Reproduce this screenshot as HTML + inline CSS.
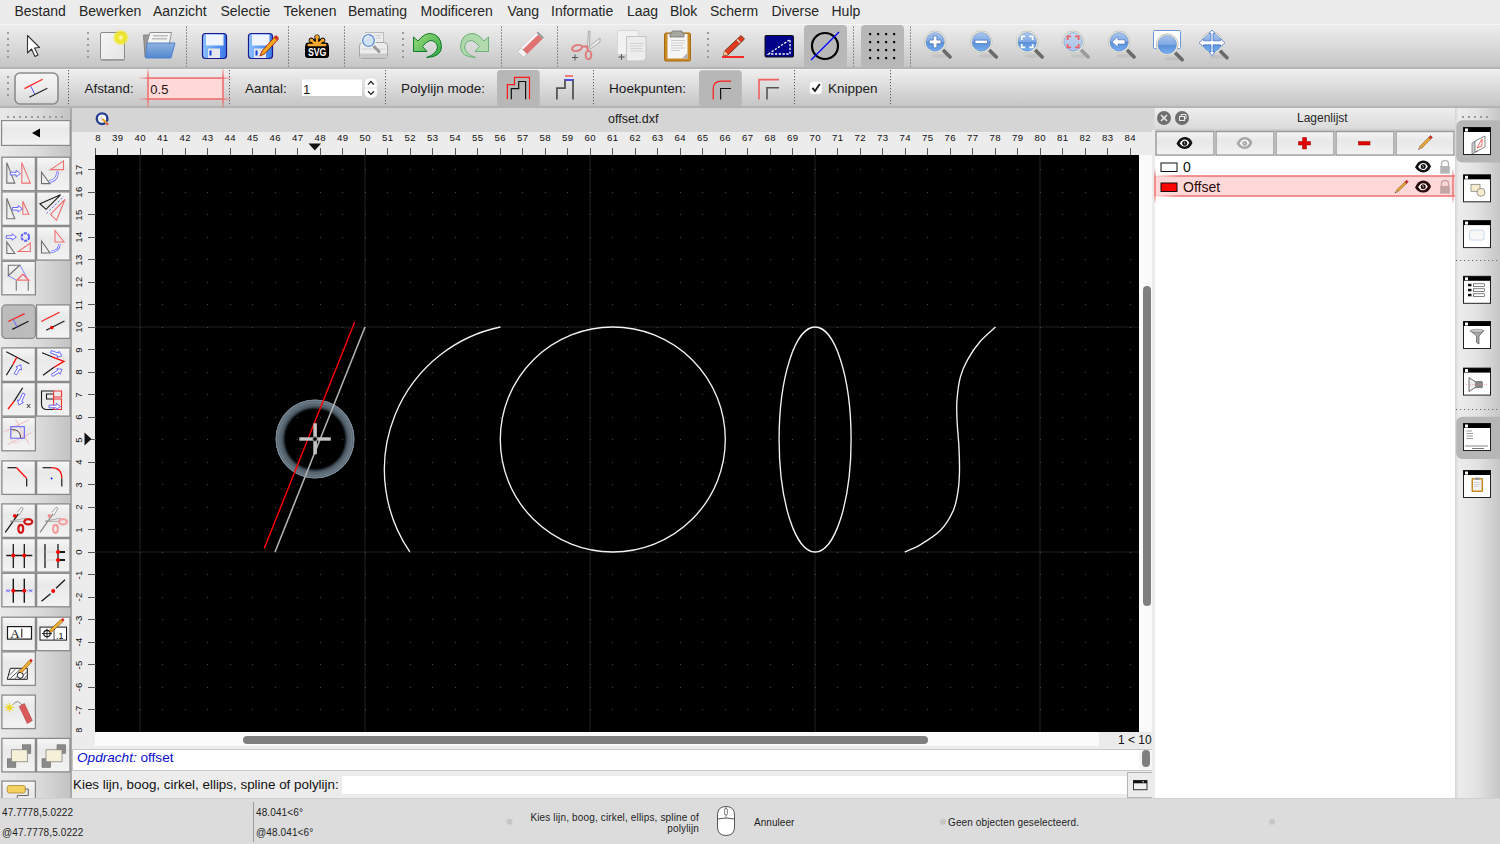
<!DOCTYPE html><html><head><meta charset="utf-8"><style>
*{margin:0;padding:0;box-sizing:border-box}
html,body{width:1500px;height:844px;overflow:hidden;background:#dcdcdc;font-family:"Liberation Sans",sans-serif;color:#222}
.a{position:absolute}
.t{position:absolute;white-space:nowrap;line-height:1}
</style></head><body>
<div class="a" style="left:0;top:0;width:1500px;height:24px;background:#ececec"></div>
<div class="t" style="left:14.5px;top:4px;font-size:14px;color:#262626">Bestand</div>
<div class="t" style="left:79px;top:4px;font-size:14px;color:#262626">Bewerken</div>
<div class="t" style="left:153px;top:4px;font-size:14px;color:#262626">Aanzicht</div>
<div class="t" style="left:220.5px;top:4px;font-size:14px;color:#262626">Selectie</div>
<div class="t" style="left:283.5px;top:4px;font-size:14px;color:#262626">Tekenen</div>
<div class="t" style="left:348px;top:4px;font-size:14px;color:#262626">Bemating</div>
<div class="t" style="left:420.5px;top:4px;font-size:14px;color:#262626">Modificeren</div>
<div class="t" style="left:507.5px;top:4px;font-size:14px;color:#262626">Vang</div>
<div class="t" style="left:551px;top:4px;font-size:14px;color:#262626">Informatie</div>
<div class="t" style="left:627px;top:4px;font-size:14px;color:#262626">Laag</div>
<div class="t" style="left:670px;top:4px;font-size:14px;color:#262626">Blok</div>
<div class="t" style="left:710px;top:4px;font-size:14px;color:#262626">Scherm</div>
<div class="t" style="left:771.5px;top:4px;font-size:14px;color:#262626">Diverse</div>
<div class="t" style="left:831.5px;top:4px;font-size:14px;color:#262626">Hulp</div>
<div class="a" style="left:0;top:24px;width:1500px;height:45px;background:linear-gradient(#ececec,#e2e2e2 30%,#d0d0d0 75%,#c6c6c6);border-top:1px solid #f6f6f6;border-bottom:2px solid #b4b4b4"></div>
<svg class="a" style="left:0;top:24px" width="1500" height="44" viewBox="0 24 1500 44"><defs><radialGradient id="glow"><stop offset="0" stop-color="#fffff4"/><stop offset=".2" stop-color="#f6f070"/><stop offset=".45" stop-color="#eee420"/><stop offset=".75" stop-color="#f0e830" stop-opacity=".8"/><stop offset="1" stop-color="#f2ea20" stop-opacity="0"/></radialGradient><linearGradient id="paper" x1="0" y1="0" x2="1" y2="1"><stop offset="0" stop-color="#f6f6f6"/><stop offset="1" stop-color="#e4e4e4"/></linearGradient><linearGradient id="fblue" x1="0" y1="0" x2="0" y2="1"><stop offset="0" stop-color="#8fb3e0"/><stop offset="1" stop-color="#5288cf"/></linearGradient><linearGradient id="flop" x1="0" y1="0" x2="1" y2="0"><stop offset="0" stop-color="#8ec2ff"/><stop offset=".5" stop-color="#5d9cf5"/><stop offset="1" stop-color="#3a7ae8"/></linearGradient><linearGradient id="grn" x1="0" y1="0" x2="1" y2="1"><stop offset="0" stop-color="#9ddb78"/><stop offset="1" stop-color="#2ea847"/></linearGradient><linearGradient id="grn2" x1="0" y1="0" x2="1" y2="1"><stop offset="0" stop-color="#a9d8a8"/><stop offset="1" stop-color="#b9ddb0"/></linearGradient><linearGradient id="mag" x1="0" y1="0" x2="0" y2="1"><stop offset="0" stop-color="#a9c6ee"/><stop offset=".5" stop-color="#7ea7e3"/><stop offset=".52" stop-color="#5b8fd8"/><stop offset="1" stop-color="#76aef0"/></linearGradient><linearGradient id="magl" x1="0" y1="0" x2="0" y2="1"><stop offset="0" stop-color="#c9daf2"/><stop offset=".5" stop-color="#b5cbea"/><stop offset="1" stop-color="#a9c4ec"/></linearGradient></defs><rect x="7" y="32" width="2" height="2" fill="#9a9a9a"/><rect x="7" y="38" width="2" height="2" fill="#9a9a9a"/><rect x="7" y="44" width="2" height="2" fill="#9a9a9a"/><rect x="7" y="50" width="2" height="2" fill="#9a9a9a"/><rect x="7" y="56" width="2" height="2" fill="#9a9a9a"/><rect x="87" y="32" width="2" height="2" fill="#9a9a9a"/><rect x="87" y="38" width="2" height="2" fill="#9a9a9a"/><rect x="87" y="44" width="2" height="2" fill="#9a9a9a"/><rect x="87" y="50" width="2" height="2" fill="#9a9a9a"/><rect x="87" y="56" width="2" height="2" fill="#9a9a9a"/><rect x="402" y="32" width="2" height="2" fill="#9a9a9a"/><rect x="402" y="38" width="2" height="2" fill="#9a9a9a"/><rect x="402" y="44" width="2" height="2" fill="#9a9a9a"/><rect x="402" y="50" width="2" height="2" fill="#9a9a9a"/><rect x="402" y="56" width="2" height="2" fill="#9a9a9a"/><rect x="707" y="32" width="2" height="2" fill="#9a9a9a"/><rect x="707" y="38" width="2" height="2" fill="#9a9a9a"/><rect x="707" y="44" width="2" height="2" fill="#9a9a9a"/><rect x="707" y="50" width="2" height="2" fill="#9a9a9a"/><rect x="707" y="56" width="2" height="2" fill="#9a9a9a"/><line x1="186.5" y1="26.5" x2="186.5" y2="66.5" stroke="#5a5a5a" stroke-width="1" stroke-dasharray="1.2 1.8"/><line x1="288.5" y1="26.5" x2="288.5" y2="66.5" stroke="#5a5a5a" stroke-width="1" stroke-dasharray="1.2 1.8"/><line x1="344.5" y1="26.5" x2="344.5" y2="66.5" stroke="#5a5a5a" stroke-width="1" stroke-dasharray="1.2 1.8"/><line x1="501.5" y1="26.5" x2="501.5" y2="66.5" stroke="#5a5a5a" stroke-width="1" stroke-dasharray="1.2 1.8"/><line x1="557.5" y1="26.5" x2="557.5" y2="66.5" stroke="#5a5a5a" stroke-width="1" stroke-dasharray="1.2 1.8"/><line x1="853.5" y1="26.5" x2="853.5" y2="66.5" stroke="#5a5a5a" stroke-width="1" stroke-dasharray="1.2 1.8"/><line x1="910.5" y1="26.5" x2="910.5" y2="66.5" stroke="#5a5a5a" stroke-width="1" stroke-dasharray="1.2 1.8"/><path d="M27.5 35.5 L27.5 53 L31.5 49 L35 56.5 L38 55 L34.5 48 L39.5 47.5 Z" fill="#fff" stroke="#333" stroke-width="1.1" stroke-linejoin="round"/><rect x="100.5" y="32.5" width="24" height="27.5" rx="1.5" fill="url(#paper)" stroke="#8a8a8a"/><rect x="101" y="59" width="23.5" height="1.5" fill="#999"/><circle cx="120.8" cy="37.6" r="8.2" fill="url(#glow)"/><path d="M143.5 35 L151 35 L151 57 L145 57 Z" fill="#9a9a9a" stroke="#777" stroke-width=".8"/><path d="M150 32.5 L171.5 32.5 L169 45 L146.5 45 Z" fill="#f4f4f4" stroke="#888" stroke-width=".9"/><rect x="153" y="35" width="15" height="1.5" fill="#bbb"/><rect x="152" y="38" width="15" height="1.5" fill="#bbb"/><path d="M147 43 L175 43 L171 58 L145.5 58 Z" fill="url(#fblue)" stroke="#4a7fc8" stroke-width=".9"/><rect x="202.5" y="33.5" width="24" height="25" rx="3" fill="url(#flop)" stroke="#1a1a90" stroke-width="1.2"/><rect x="206" y="34.5" width="17.5" height="11" fill="#f0f4ff"/><rect x="208" y="48.5" width="12" height="9.5" fill="#e6e6ee"/><rect x="209.5" y="50.5" width="2" height="5" fill="#1040e0"/><rect x="248.5" y="33.5" width="24" height="25" rx="3" fill="url(#flop)" stroke="#1a1a90" stroke-width="1.2"/><rect x="252" y="34.5" width="17.5" height="11" fill="#f0f4ff"/><rect x="254" y="48.5" width="12" height="9.5" fill="#e6e6ee"/><rect x="255.5" y="50.5" width="2" height="5" fill="#1040e0"/><path d="M260 56 L262 51 L275 36.5 L278 39.5 L265 53.5 Z" fill="#f7a81c" stroke="#a02010" stroke-width=".9"/><path d="M274 37.5 L276 35 L279 38 L277 40.5 Z" fill="#d03020"/><g stroke="#000" stroke-width="5.2" stroke-linecap="round" fill="none"><path d="M308 45 H326 M317 45 V37 M317 45 L311.3 40.2 M317 45 L322.7 40.2"/></g><rect x="305" y="44.5" width="24" height="13.5" rx="3" fill="#000"/><g stroke="#f7a72b" stroke-width="2.4" stroke-linecap="round" fill="none"><path d="M308.6 45 H325.4 M317 45 V37.2 M317 45 L311.5 40.4 M317 45 L322.5 40.4"/></g><circle cx="317" cy="37" r="2" fill="#f7a72b"/><circle cx="311.3" cy="40.2" r="1.8" fill="#f7a72b"/><circle cx="322.7" cy="40.2" r="1.8" fill="#f7a72b"/><text x="317.2" y="56.3" text-anchor="middle" font-family="Liberation Sans" font-weight="bold" font-size="11.5" fill="#fff" textLength="18.5" lengthAdjust="spacingAndGlyphs">SVG</text><rect x="365.5" y="32.5" width="18" height="16" fill="#ececec" stroke="#bdbdbd"/><path d="M369 35.5 H381 M369 38 H381" stroke="#cfcfcf" stroke-width="1"/><path d="M359.5 46 Q359.5 42.5 363 42.5 L384 42.5 Q387.5 42.5 387.5 46 L387.5 56 Q387.5 58.5 385 58.5 L362 58.5 Q359.5 58.5 359.5 56 Z" fill="#ececec" stroke="#a8a8a8"/><rect x="360" y="53.5" width="27" height="4.5" fill="#cacaca"/><rect x="361" y="48.5" width="25" height="1" fill="#d0d0d0"/><line x1="372.5" y1="45" x2="379" y2="51.5" stroke="#9a9a9a" stroke-width="3" stroke-linecap="round"/><circle cx="368.5" cy="40.5" r="7.5" fill="#f2f2f2"/><circle cx="368.5" cy="40.5" r="5.8" fill="#d2e2f6" stroke="#5a8ad0" stroke-width="1.3"/><path d="M364.5 39.5 Q365.5 36 369 35.8" fill="none" stroke="#fff" stroke-width="1.2" opacity=".8"/><path d="M413.5 37 L413.5 51.5 L427 51.5 L422.5 46.5 Q426 42 430 40.5 Q436.5 40.5 437.5 47 Q437 54 426.5 57.5 Q441.5 57 441.5 46.5 Q440.5 34 430 33.5 Q424 33.5 418 41 Z" fill="url(#grn)" stroke="#127a2c" stroke-width="1"/><path d="M488.5 37 L488.5 51.5 L475 51.5 L479.5 46.5 Q476 42 472 40.5 Q465.5 40.5 464.5 47 Q465 54 475.5 57.5 Q460.5 57 460.5 46.5 Q461.5 34 472 33.5 Q478 33.5 484 41 Z" fill="url(#grn2)" stroke="#6cb07c" stroke-width="1"/><ellipse cx="532" cy="57.5" rx="10" ry="1.5" fill="#cfcfcf"/><path d="M517.5 51.5 L536.5 33 L542.5 39 L523.5 57.5 Z" fill="#e07272"/><path d="M520.5 48.5 L539.5 30 L540.5 36 L521.5 54.5 Z" fill="#f2f2f2" opacity=".0"/><path d="M519.7 49.3 L538.2 31.3 L539.9 33 L521.4 51 Z" fill="#f6f6f6"/><path d="M536.5 33 L538 31.5 L544 37.5 L542.5 39 Z" fill="#9a9a9a"/><path d="M517.5 51.5 L521 48 L527 54 L523.5 57.5 Z" fill="#f2f2f2" stroke="#b8b8b8" stroke-width=".6"/><path d="M587.5 46 L588.5 31 L590 31 L589.5 47 Z" fill="#f0f0f0" stroke="#9a9a9a" stroke-width=".8"/><path d="M589 47 L600 38 L600 42 L590 49 Z" fill="#f0f0f0" stroke="#9a9a9a" stroke-width=".8"/><ellipse cx="577" cy="48" rx="5" ry="2.8" fill="none" stroke="#e07a7a" stroke-width="2" transform="rotate(-15 577 48)"/><ellipse cx="588.5" cy="55" rx="2.8" ry="4.3" fill="none" stroke="#e07a7a" stroke-width="2"/><path d="M581 46.5 L587 46.5 L588 51" stroke="#e07a7a" stroke-width="2" fill="none"/><path d="M572 57.5 H578 M575 54.5 V60.5" stroke="#555" stroke-width="1"/><rect x="617.5" y="30.5" width="21" height="24" rx="1.5" fill="#f2f2f2" stroke="#d8d8d8"/><path d="M626.5 36.5 H646 V58 L643 61 H626.5 Z" fill="#ededed" stroke="#c4c4c4"/><path d="M630 43.5 H643.5 M630 46 H643 M630 48.5 H642 M630 51 H643.5" stroke="#cfcfcf" stroke-width=".9"/><path d="M618.5 57 H624.5 M621.5 54 V60" stroke="#555" stroke-width="1"/><rect x="664.5" y="33" width="26" height="28" rx="1.5" fill="#c98a26" stroke="#a66a10"/><rect x="667.5" y="34" width="20" height="24.5" fill="#f6f6f6"/><path d="M672 31 H682 V33 H684 V37 H670 V33 H672 Z" fill="#a8a8a0" stroke="#777" stroke-width=".8"/><path d="M671 40.5 H685 M671 43 H684.5 M671 45.5 H683 M671 48 H685 M671 50.5 H680" stroke="#c8c8c8" stroke-width=".9"/><path d="M682 58.5 L687.5 53 V58.5 Z" fill="#b0b0b0"/><path d="M723.5 55.5 L724.5 51 L741 35.5 L744.5 39 L728 55 Z" fill="#e03a20" stroke="#6a3a10" stroke-width=".9"/><path d="M723.5 55.5 L724.5 51 L728 54.5 Z" fill="#f2c8a0"/><path d="M737 39.5 L740 42.5" stroke="#ddd" stroke-width="1.4"/><rect x="722" y="56.2" width="22" height="1.6" fill="#ff0000"/><rect x="765" y="35.5" width="28.5" height="21.5" rx="1" fill="#000088" stroke="#111" stroke-width="1"/><path d="M768.5 54 L790 39.5 V54 Z" fill="none" stroke="#fff" stroke-width="1.3" stroke-dasharray="2.3 1.5"/><rect x="804" y="25" width="43" height="43" rx="4" fill="#b8b8b8"/><circle cx="825" cy="46" r="13" fill="none" stroke="#000" stroke-width="2.2"/><line x1="811" y1="60" x2="839" y2="32" stroke="#0000ff" stroke-width="1.2"/><rect x="861" y="25" width="43" height="43" rx="4" fill="#b8b8b8"/><rect x="869" y="33" width="2.2" height="2.2" fill="#111"/><rect x="869" y="41" width="2.2" height="2.2" fill="#111"/><rect x="869" y="49" width="2.2" height="2.2" fill="#111"/><rect x="869" y="57" width="2.2" height="2.2" fill="#111"/><rect x="877" y="33" width="2.2" height="2.2" fill="#111"/><rect x="877" y="41" width="2.2" height="2.2" fill="#111"/><rect x="877" y="49" width="2.2" height="2.2" fill="#111"/><rect x="877" y="57" width="2.2" height="2.2" fill="#111"/><rect x="885" y="33" width="2.2" height="2.2" fill="#111"/><rect x="885" y="41" width="2.2" height="2.2" fill="#111"/><rect x="885" y="49" width="2.2" height="2.2" fill="#111"/><rect x="885" y="57" width="2.2" height="2.2" fill="#111"/><rect x="893" y="33" width="2.2" height="2.2" fill="#111"/><rect x="893" y="41" width="2.2" height="2.2" fill="#111"/><rect x="893" y="49" width="2.2" height="2.2" fill="#111"/><rect x="893" y="57" width="2.2" height="2.2" fill="#111"/><ellipse cx="941.1" cy="55.9" rx="9" ry="2" fill="#000" opacity=".06"/><line x1="943.6" y1="50.4" x2="950.1" y2="56.9" stroke="#6a6a6a" stroke-width="3.6" stroke-linecap="round"/><circle cx="935.1" cy="41.9" r="11" fill="#f2f2ec" stroke="#c8c8bc" stroke-width="1"/><circle cx="935.1" cy="41.9" r="9.3" fill="url(#mag)" stroke="#6f8fb8" stroke-width=".6"/><path d="M933.3 36 H936.9 V40.1 H941 V43.7 H936.9 V47.8 H933.3 V43.7 H929.2 V40.1 H933.3 Z" fill="#fff" stroke="#2a5aa8" stroke-width=".6"/><ellipse cx="987.3" cy="55.9" rx="9" ry="2" fill="#000" opacity=".06"/><line x1="989.8" y1="50.4" x2="996.3" y2="56.9" stroke="#6a6a6a" stroke-width="3.6" stroke-linecap="round"/><circle cx="981.3" cy="41.9" r="11" fill="#f2f2ec" stroke="#c8c8bc" stroke-width="1"/><circle cx="981.3" cy="41.9" r="9.3" fill="url(#mag)" stroke="#6f8fb8" stroke-width=".6"/><rect x="975" y="40.1" width="12.6" height="3.6" fill="#fff" stroke="#2a5aa8" stroke-width=".6"/><ellipse cx="1033.2" cy="55.9" rx="9" ry="2" fill="#000" opacity=".06"/><line x1="1035.7" y1="50.4" x2="1042.2" y2="56.9" stroke="#6a6a6a" stroke-width="3.6" stroke-linecap="round"/><circle cx="1027.2" cy="41.9" r="11" fill="#f2f2ec" stroke="#c8c8bc" stroke-width="1"/><circle cx="1027.2" cy="41.9" r="9.3" fill="url(#mag)" stroke="#6f8fb8" stroke-width=".6"/><path d="M1021.7 39.9 V36.4 H1025.2 M1029.2 36.4 H1032.7 V39.9 M1032.7 43.9 V47.4 H1029.2 M1025.2 47.4 H1021.7 V43.9" fill="none" stroke="#fff" stroke-width="1.8"/><ellipse cx="1079.1" cy="55.9" rx="9" ry="2" fill="#000" opacity=".06"/><line x1="1081.6" y1="50.4" x2="1088.1" y2="56.9" stroke="#9a9a9a" stroke-width="3.6" stroke-linecap="round"/><circle cx="1073.1" cy="41.9" r="11" fill="#f2f2ec" stroke="#c8c8bc" stroke-width="1"/><circle cx="1073.1" cy="41.9" r="9.3" fill="url(#magl)" stroke="#6f8fb8" stroke-width=".6"/><path d="M1067.6 39.9 V36.4 H1071.1 M1075.1 36.4 H1078.6 V39.9 M1078.6 43.9 V47.4 H1075.1 M1071.1 47.4 H1067.6 V43.9" fill="none" stroke="#f06060" stroke-width="1.8"/><ellipse cx="1125.1" cy="55.9" rx="9" ry="2" fill="#000" opacity=".06"/><line x1="1127.6" y1="50.4" x2="1134.1" y2="56.9" stroke="#6a6a6a" stroke-width="3.6" stroke-linecap="round"/><circle cx="1119.1" cy="41.9" r="11" fill="#f2f2ec" stroke="#c8c8bc" stroke-width="1"/><circle cx="1119.1" cy="41.9" r="9.3" fill="url(#mag)" stroke="#6f8fb8" stroke-width=".6"/><path d="M1112 41.9 L1118 36.5 V39.8 H1125 V44 H1118 V47.3 Z" fill="#fff" stroke="#2a5aa8" stroke-width=".5"/><rect x="1153.5" y="30.5" width="27" height="18" rx="1" fill="#fff" stroke="#6a96d8"/><ellipse cx="1173.2" cy="58.7" rx="9" ry="2" fill="#000" opacity=".06"/><line x1="1175.7" y1="53.2" x2="1182.2" y2="59.7" stroke="#6a6a6a" stroke-width="3.6" stroke-linecap="round"/><circle cx="1167.2" cy="44.7" r="11" fill="#f2f2ec" stroke="#c8c8bc" stroke-width="1"/><circle cx="1167.2" cy="44.7" r="9.3" fill="url(#mag)" stroke="#6f8fb8" stroke-width=".6"/><ellipse cx="1218" cy="56.8" rx="9" ry="2" fill="#000" opacity=".06"/><line x1="1220.5" y1="51.3" x2="1227" y2="57.8" stroke="#6a6a6a" stroke-width="3.6" stroke-linecap="round"/><circle cx="1212" cy="42.8" r="11" fill="#f2f2ec" stroke="#c8c8bc" stroke-width="1"/><circle cx="1212" cy="42.8" r="9.3" fill="url(#mag)" stroke="#6f8fb8" stroke-width=".6"/><path d="M1212 30 L1215 33.5 H1213 V40.8 H1220.5 V38.8 L1225 42.8 L1220.5 46.8 V44.8 H1213 V52 H1215 L1212 55.5 L1209 52 H1211 V44.8 H1203.5 V46.8 L1199 42.8 L1203.5 38.8 V40.8 H1211 V33.5 H1209 Z" fill="#fff" stroke="#3a6ac0" stroke-width=".7"/></svg>
<div class="a" style="left:0;top:69px;width:1500px;height:39px;background:linear-gradient(#eeeeee,#e2e2e2 30%,#d0d0d0 75%,#c6c6c6);border-top:1px solid #f2f2f2;border-bottom:2px solid #b4b4b4"></div>
<svg class="a" style="left:0;top:68px" width="1500" height="40" viewBox="0 68 1500 40"><rect x="7" y="76" width="2" height="2" fill="#9a9a9a"/><rect x="7" y="82" width="2" height="2" fill="#9a9a9a"/><rect x="7" y="88" width="2" height="2" fill="#9a9a9a"/><rect x="7" y="94" width="2" height="2" fill="#9a9a9a"/><defs><linearGradient id="btn" x1="0" y1="0" x2="0" y2="1"><stop offset="0" stop-color="#f6f6f6"/><stop offset=".5" stop-color="#ececec"/><stop offset="1" stop-color="#d8d8d8"/></linearGradient></defs><rect x="15" y="73" width="43" height="31" rx="5" fill="url(#btn)" stroke="#8c8c8c" stroke-width="1.6"/><line x1="24.5" y1="88.6" x2="42.6" y2="79.2" stroke="#ff2020" stroke-width="1.2"/><line x1="29.4" y1="97.3" x2="47.3" y2="88.3" stroke="#222" stroke-width="1.2"/><line x1="30.8" y1="86.3" x2="35" y2="94.6" stroke="#5050ff" stroke-width="1"/><line x1="68.5" y1="70" x2="68.5" y2="106" stroke="#5a5a5a" stroke-width="1" stroke-dasharray="1.2 1.8"/><line x1="229.5" y1="70" x2="229.5" y2="106" stroke="#5a5a5a" stroke-width="1" stroke-dasharray="1.2 1.8"/><line x1="385.5" y1="70" x2="385.5" y2="106" stroke="#5a5a5a" stroke-width="1" stroke-dasharray="1.2 1.8"/><line x1="593.5" y1="70" x2="593.5" y2="106" stroke="#5a5a5a" stroke-width="1" stroke-dasharray="1.2 1.8"/><line x1="794.5" y1="70" x2="794.5" y2="106" stroke="#5a5a5a" stroke-width="1" stroke-dasharray="1.2 1.8"/><line x1="890.5" y1="70" x2="890.5" y2="106" stroke="#5a5a5a" stroke-width="1" stroke-dasharray="1.2 1.8"/><rect x="148" y="78" width="75" height="21" fill="#ffd9d9"/><defs><linearGradient id="rh" x1="0" y1="0" x2="1" y2="0"><stop offset="0" stop-color="#f07070" stop-opacity="0"/><stop offset=".12" stop-color="#f07070"/><stop offset=".88" stop-color="#f07070"/><stop offset="1" stop-color="#f07070" stop-opacity="0"/></linearGradient><linearGradient id="rv" x1="0" y1="0" x2="0" y2="1"><stop offset="0" stop-color="#f07070" stop-opacity=".3"/><stop offset=".2" stop-color="#f07070"/><stop offset=".8" stop-color="#f07070"/><stop offset="1" stop-color="#f07070" stop-opacity=".3"/></linearGradient></defs><rect x="138" y="77.3" width="95" height="1.6" fill="url(#rh)"/><rect x="138" y="98.2" width="95" height="1.6" fill="url(#rh)"/><rect x="147.2" y="69" width="1.6" height="39" fill="url(#rv)"/><rect x="222.2" y="69" width="1.6" height="39" fill="url(#rv)"/><rect x="302" y="79.5" width="60" height="17.5" fill="#fff"/><rect x="302" y="96.2" width="60" height="1" fill="#bdbdbd"/><rect x="364.6" y="77.9" width="12.6" height="20" rx="5" fill="#fff" stroke="#dedede" stroke-width=".6"/><rect x="365" y="87.5" width="12" height="1" fill="#e4e4e4"/><path d="M368 84.6 L371 81.5 L374 84.6 M368 91.3 L371 94.4 L374 91.3" fill="none" stroke="#222" stroke-width="1.3"/><rect x="497" y="70" width="42.7" height="36.4" rx="3.5" fill="#b7b7b7"/><path d="M507.4 99.2 V84.6 H514.5 V77.4 H529.5 V99.2" fill="none" stroke="#ff1a1a" stroke-width="1.2"/><path d="M511.3 99.2 V88.6 H518.7 V81.5 H525.6 V99.2" fill="none" stroke="#111" stroke-width="1.2"/><path d="M556.9 99.5 V88.1 H565 V80 H573 V99.5" fill="none" stroke="#555" stroke-width="1.8"/><rect x="565" y="79" width="8" height="1.7" fill="#4a4aff"/><rect x="565" y="75.2" width="8" height="1.6" fill="#f06060"/><rect x="699" y="70.3" width="42.8" height="36" rx="3.5" fill="#b7b7b7"/><path d="M713.2 99.5 V89 Q713.2 81.2 721.5 81.2 H731" fill="none" stroke="#ff1a1a" stroke-width="1.2"/><path d="M720.6 99.5 V88.5 H731" fill="none" stroke="#111" stroke-width="1.2"/><path d="M759 99.5 V79.6 H779" fill="none" stroke="#f06060" stroke-width="1.6"/><path d="M767 99.5 V87.8 H779" fill="none" stroke="#555" stroke-width="1.6"/><rect x="809.8" y="81.5" width="12.2" height="12.6" rx="3" fill="#fff" stroke="#e0e0e0" stroke-width=".6"/><path d="M812.4 87.8 L815 91 L819.8 84" fill="none" stroke="#1a1a1a" stroke-width="1.9"/></svg>
<div class="t" style="left:84.5px;top:82.26px;font-size:13.4px;color:#1a1a1a;">Afstand:</div>
<div class="t" style="left:150.3px;top:82.60px;font-size:13px;color:#1e1010;">0.5</div>
<div class="t" style="left:245px;top:82.26px;font-size:13.4px;color:#1a1a1a;">Aantal:</div>
<div class="t" style="left:303px;top:82.60px;font-size:13px;color:#1a1a1a;">1</div>
<div class="t" style="left:401px;top:82.17px;font-size:13.5px;color:#1a1a1a;">Polylijn mode:</div>
<div class="t" style="left:609px;top:82.09px;font-size:13.6px;color:#1a1a1a;">Hoekpunten:</div>
<div class="t" style="left:828px;top:82.17px;font-size:13.5px;color:#1a1a1a;">Knippen</div>
<div class="a" style="left:0;top:108px;width:71px;height:690px;background:linear-gradient(90deg,#e9e9e9,#dadada 55%,#c3c3c3)"></div>
<div class="a" style="left:70px;top:108px;width:2px;height:690px;background:#a9a9a9"></div>
<svg class="a" style="left:0;top:108px" width="72" height="690" viewBox="0 108 72 690"><defs><linearGradient id="lb" x1="0" y1="0" x2="0" y2="1"><stop offset="0" stop-color="#f7f7f7"/><stop offset=".35" stop-color="#e9e9e9"/><stop offset="1" stop-color="#f3f3f3"/></linearGradient><marker id="ah" viewBox="0 0 10 10" refX="5" refY="5" markerWidth="3" markerHeight="3" orient="auto"><path d="M0 0L10 5L0 10z" fill="#fff" stroke="#5a5aff" stroke-width="2"/></marker></defs><rect x="7" y="116" width="2" height="2" fill="#9a9a9a"/><rect x="13" y="116" width="2" height="2" fill="#9a9a9a"/><rect x="19" y="116" width="2" height="2" fill="#9a9a9a"/><rect x="25" y="116" width="2" height="2" fill="#9a9a9a"/><rect x="31" y="116" width="2" height="2" fill="#9a9a9a"/><rect x="37" y="116" width="2" height="2" fill="#9a9a9a"/><rect x="43" y="116" width="2" height="2" fill="#9a9a9a"/><rect x="49" y="116" width="2" height="2" fill="#9a9a9a"/><rect x="55" y="116" width="2" height="2" fill="#9a9a9a"/><rect x="61" y="116" width="2" height="2" fill="#9a9a9a"/><rect x="1.6" y="120.6" width="68.6" height="24.8" fill="url(#lb)" stroke="#8a8a8a" stroke-width="1.2"/><path d="M32 133 L40 128.5 V137.5 Z" fill="#000"/><rect x="1.9" y="157.2" width="33.5" height="33.5" fill="url(#lb)" stroke="#8a8a8a" stroke-width="1.3"/><g transform="translate(1.3,156.6)"><path d="M5.5 6 V26.5 H13.5 Z" fill="none" stroke="#707070" stroke-width="1.1"/><path d="M20.5 6 V26.5 H29 Z" fill="none" stroke="#f27070" stroke-width="1.1"/><path d="M9.00 18.30 L14.80 18.30 L14.80 20.20 L19.00 17.00 L14.80 13.80 L14.80 15.70 L9.00 15.70 Z" fill="#fff" stroke="#5a5aff" stroke-width=".9" stroke-linejoin="miter"/></g><rect x="36.6" y="157.2" width="33.4" height="33.5" fill="url(#lb)" stroke="#8a8a8a" stroke-width="1.3"/><g transform="translate(36,156.6)"><path d="M14.5 13 L27.5 4.5 V13 Z" fill="none" stroke="#f27070" stroke-width="1.1"/><path d="M5.5 15.5 V27 H14 Z" fill="none" stroke="#707070" stroke-width="1.1"/><path d="M13 25 Q21 24 21.5 16" fill="none" stroke="#5a5aff" stroke-width="2.6"/><path d="M13 25 Q21 24 21.5 16" fill="none" stroke="#fff" stroke-width="1.1" marker-end="url(#ah)"/></g><rect x="1.9" y="191.9" width="33.5" height="33.5" fill="url(#lb)" stroke="#8a8a8a" stroke-width="1.3"/><g transform="translate(1.3,191.3)"><path d="M5.5 7 V27.5 H13.5 Z" fill="none" stroke="#707070" stroke-width="1.1"/><path d="M21.5 10 V23 H27.5 Z" fill="none" stroke="#f27070" stroke-width="1.1"/><path d="M11.00 18.80 L16.80 18.80 L16.80 20.70 L21.00 17.50 L16.80 14.30 L16.80 16.20 L11.00 16.20 Z" fill="#fff" stroke="#5a5aff" stroke-width=".9" stroke-linejoin="miter"/></g><rect x="36.6" y="191.9" width="33.4" height="33.5" fill="url(#lb)" stroke="#8a8a8a" stroke-width="1.3"/><g transform="translate(36,191.3)"><path d="M4 12.5 L24.5 3.5 L10 18 Z" fill="none" stroke="#1a1a1a" stroke-width="1.1"/><path d="M14.5 23 L29 8 L20.5 29 Z" fill="none" stroke="#f27070" stroke-width="1.1"/><line x1="10.5" y1="22" x2="28" y2="5" stroke="#5a5aff" stroke-width="1" stroke-dasharray="2 2"/></g><rect x="1.9" y="226.6" width="33.5" height="33.5" fill="url(#lb)" stroke="#8a8a8a" stroke-width="1.3"/><g transform="translate(1.3,226.0)"><path d="M5.00 12.30 L10.80 12.30 L10.80 14.20 L15.00 11.00 L10.80 7.80 L10.80 9.70 L5.00 9.70 Z" fill="#fff" stroke="#5a5aff" stroke-width=".9" stroke-linejoin="miter"/><circle cx="24" cy="11" r="3.8" fill="none" stroke="#5a5aff" stroke-width="2" stroke-dasharray="3 1"/><path d="M5.5 16 V27.5 H13.5 Z" fill="none" stroke="#707070" stroke-width="1.1"/><path d="M17 25.5 L29 17 V25.5 Z" fill="none" stroke="#f27070" stroke-width="1.1"/></g><rect x="36.6" y="226.6" width="33.4" height="33.5" fill="url(#lb)" stroke="#8a8a8a" stroke-width="1.3"/><g transform="translate(36,226.0)"><path d="M19 4.5 V16 H28 Z" fill="none" stroke="#f27070" stroke-width="1.1"/><path d="M5.5 15 V27 H14 Z" fill="none" stroke="#707070" stroke-width="1.1"/><path d="M15 26 Q23 25 23.5 18" fill="none" stroke="#5a5aff" stroke-width="2.4"/><path d="M15 26 Q23 25 23.5 18" fill="none" stroke="#fff" stroke-width="1"/></g><rect x="1.9" y="261.3" width="33.5" height="33.5" fill="url(#lb)" stroke="#8a8a8a" stroke-width="1.3"/><g transform="translate(1.3,260.7)"><path d="M7 4.5 H18.5 L7 15 Z" fill="none" stroke="#707070" stroke-width="1.1"/><path d="M18.5 4.5 L27 19.5 M7 15 L15 19.5" stroke="#5a5aff" stroke-width=".7" fill="none"/><path d="M15.5 19.5 L21.5 13.5 L27.5 19.5 Z" fill="none" stroke="#f27070" stroke-width="1.3"/><path d="M15 20 V30 M27 20 V30" stroke="#888" stroke-width="1.3"/></g><rect x="1.9" y="304.90000000000003" width="33.5" height="33.5" rx="4" fill="#bcbcbc" stroke="#8a8a8a" stroke-width="1.2"/><g transform="translate(1.3,304.3)"><line x1="7" y1="17.2" x2="23.3" y2="9.3" stroke="#ff2020" stroke-width="1.2"/><line x1="11" y1="25.1" x2="27.2" y2="16.9" stroke="#1a1a1a" stroke-width="1.2"/><line x1="11.9" y1="15" x2="16.2" y2="23.5" stroke="#5a5aff" stroke-width=".9"/></g><rect x="36.6" y="304.90000000000003" width="33.4" height="33.5" fill="url(#lb)" stroke="#8a8a8a" stroke-width="1.3"/><g transform="translate(36,304.3)"><line x1="5.2" y1="17.2" x2="23.6" y2="8" stroke="#ff2020" stroke-width="1.2"/><line x1="10.2" y1="26" x2="28.5" y2="16.7" stroke="#1a1a1a" stroke-width="1.2"/><circle cx="15.8" cy="23.3" r="1.8" fill="#f00"/></g><rect x="1.9" y="347.90000000000003" width="33.5" height="33.5" fill="url(#lb)" stroke="#8a8a8a" stroke-width="1.3"/><g transform="translate(1.3,347.3)"><path d="M5 4.5 L28 16.5" stroke="#1a1a1a" stroke-width="1.2"/><path d="M15.5 10 L11.5 17.5" stroke="#f00" stroke-width="1.3"/><path d="M11.5 17.5 L5 28" stroke="#1a1a1a" stroke-width="1.2"/><path d="M15.13 27.65 L18.52 21.79 L20.17 22.74 L19.50 17.50 L14.63 19.53 L16.27 20.48 L12.87 26.35 Z" fill="#fff" stroke="#5a5aff" stroke-width=".9" stroke-linejoin="miter"/></g><rect x="36.6" y="347.90000000000003" width="33.4" height="33.5" fill="url(#lb)" stroke="#8a8a8a" stroke-width="1.3"/><g transform="translate(36,347.3)"><path d="M6 5.5 L16 9.5" stroke="#1a1a1a" stroke-width="1.2"/><path d="M16 9.5 L28 14 L18 20" stroke="#f00" stroke-width="1.3" fill="none"/><path d="M18 20 L7 28" stroke="#1a1a1a" stroke-width="1.2"/><path d="M14.56 5.72 L21.61 8.29 L20.96 10.07 L26.00 8.50 L23.15 4.06 L22.50 5.84 L15.44 3.28 Z" fill="#fff" stroke="#5a5aff" stroke-width=".9" stroke-linejoin="miter"/><path d="M16.67 29.11 L23.07 25.28 L24.04 26.90 L26.00 22.00 L20.75 21.42 L21.73 23.05 L15.33 26.89 Z" fill="#fff" stroke="#5a5aff" stroke-width=".9" stroke-linejoin="miter"/></g><rect x="1.9" y="382.6" width="33.5" height="33.5" fill="url(#lb)" stroke="#8a8a8a" stroke-width="1.3"/><g transform="translate(1.3,382.0)"><path d="M21.4 5.8 L12.9 19.1" stroke="#1a1a1a" stroke-width="1.2"/><path d="M12.9 19.1 L6.7 27.2" stroke="#f00" stroke-width="1.3"/><path d="M21.31 10.98 L17.98 18.63 L16.24 17.87 L17.50 23.00 L22.11 20.42 L20.37 19.67 L23.69 12.02 Z" fill="#fff" stroke="#5a5aff" stroke-width=".9" stroke-linejoin="miter"/><path d="M25.5 22 L29 26 M29 22 L25.5 26" stroke="#333" stroke-width="1"/></g><rect x="36.6" y="382.6" width="33.4" height="33.5" fill="url(#lb)" stroke="#8a8a8a" stroke-width="1.3"/><g transform="translate(36,382.0)"><path d="M17.6 9 H5.5 V22 Q5.5 27.5 11 27.5 H17.6 M17.6 12 H10.5 V17 H17.6" fill="none" stroke="#1a1a1a" stroke-width="1.1"/><path d="M17.6 9 H25.5 V15 H17.6 V17 H25.5 V27.5 H17.6 Z" fill="none" stroke="#f03030" stroke-width="1.1"/><path d="M13.00 25.80 L20.30 25.80 L20.30 27.70 L24.50 24.50 L20.30 21.30 L20.30 23.20 L13.00 23.20 Z" fill="#fff" stroke="#5a5aff" stroke-width=".9" stroke-linejoin="miter"/></g><rect x="1.9" y="417.30000000000007" width="33.5" height="33.5" fill="url(#lb)" stroke="#8a8a8a" stroke-width="1.3"/><g transform="translate(1.3,416.70000000000005)"><path d="M3 15 L28 3 M6 28 L30 16 M14 2 L28 28" stroke="#f4b0b0" stroke-width=".8" fill="none"/><circle cx="15" cy="20" r="6" fill="none" stroke="#f4c0c0" stroke-width=".8"/><rect x="9.5" y="10" width="13.5" height="11.5" fill="none" stroke="#5a5aff" stroke-width="1"/><path d="M10 13 Q19 12 19.5 21.5" fill="none" stroke="#444" stroke-width="1"/></g><rect x="1.9" y="460.90000000000003" width="33.5" height="33.5" fill="url(#lb)" stroke="#8a8a8a" stroke-width="1.3"/><g transform="translate(1.3,460.3)"><path d="M6.2 7.4 H15.3" stroke="#1a1a1a" stroke-width="1.2"/><path d="M15.3 7.4 L25.4 18.1" stroke="#f00" stroke-width="1.3"/><path d="M25.4 18.1 V26.2" stroke="#1a1a1a" stroke-width="1.2"/></g><rect x="36.6" y="460.90000000000003" width="33.4" height="33.5" fill="url(#lb)" stroke="#8a8a8a" stroke-width="1.3"/><g transform="translate(36,460.3)"><path d="M6.6 7.4 H15.2" stroke="#1a1a1a" stroke-width="1.2"/><path d="M15.2 7.4 Q25.8 7.4 25.8 18.1" fill="none" stroke="#f00" stroke-width="1.3"/><path d="M25.8 18.1 V26.2" stroke="#1a1a1a" stroke-width="1.2"/><circle cx="15.6" cy="18.1" r=".9" fill="#00f"/></g><rect x="1.9" y="503.90000000000003" width="33.5" height="33.5" fill="url(#lb)" stroke="#8a8a8a" stroke-width="1.3"/><g transform="translate(1.3,503.3)"><path d="M4 29 L21 5" stroke="#111" stroke-width="1.2"/><path d="M9 18 L24 15 L23 18 Z" fill="#f4f4f4" stroke="#888" stroke-width=".7"/><path d="M16 9 L20 4 L22 5 L18 12" fill="#f4f4f4" stroke="#888" stroke-width=".7"/><circle cx="13.5" cy="12.5" r="1.9" fill="#f00"/><ellipse cx="27" cy="18.5" rx="4" ry="2.6" fill="none" stroke="#d01818" stroke-width="2.2"/><ellipse cx="19.5" cy="25.5" rx="2.4" ry="4" fill="none" stroke="#d01818" stroke-width="2.2"/></g><rect x="36.6" y="503.90000000000003" width="33.4" height="33.5" fill="url(#lb)" stroke="#8a8a8a" stroke-width="1.3"/><g transform="translate(36,503.3)"><path d="M4 29 L21 5" stroke="#888" stroke-width="1.2"/><path d="M9 18 L24 15 L23 18 Z" fill="#f4f4f4" stroke="#888" stroke-width=".7"/><path d="M16 9 L20 4 L22 5 L18 12" fill="#f4f4f4" stroke="#888" stroke-width=".7"/><circle cx="13.5" cy="12.5" r="1.9" fill="#f09090"/><ellipse cx="27" cy="18.5" rx="4" ry="2.6" fill="none" stroke="#f4a0a0" stroke-width="2.2"/><ellipse cx="19.5" cy="25.5" rx="2.4" ry="4" fill="none" stroke="#f4a0a0" stroke-width="2.2"/></g><rect x="1.9" y="538.6" width="33.5" height="33.5" fill="url(#lb)" stroke="#8a8a8a" stroke-width="1.3"/><g transform="translate(1.3,538.0)"><path d="M12 6 V30 M23 6 V30 M5 17.5 H31" stroke="#1a1a1a" stroke-width="1.3"/><circle cx="12" cy="17.5" r="2" fill="#f00"/><circle cx="23" cy="17.5" r="2" fill="#f00"/></g><rect x="36.6" y="538.6" width="33.4" height="33.5" fill="url(#lb)" stroke="#8a8a8a" stroke-width="1.3"/><g transform="translate(36,538.0)"><path d="M9 6 V30 M22 6 V30" stroke="#1a1a1a" stroke-width="1.3"/><path d="M9 14 H22 M9 22 H22" stroke="#bbb" stroke-width=".8" stroke-dasharray="1.5 1"/><path d="M22 14 H29 M22 22 H29" stroke="#1a1a1a" stroke-width="1.8"/><circle cx="22" cy="14" r="2" fill="#f00"/><circle cx="22" cy="22" r="2" fill="#f00"/></g><rect x="1.9" y="573.3000000000001" width="33.5" height="33.5" fill="url(#lb)" stroke="#8a8a8a" stroke-width="1.3"/><g transform="translate(1.3,572.7)"><path d="M12 6 V30 M23 6 V30 M12 18 H23" stroke="#1a1a1a" stroke-width="1.4"/><path d="M5 18 H12 M23 18 H31" stroke="#5a5aff" stroke-width=".8" stroke-dasharray="1.5 1"/><path d="M5 16.5 L8 19.5 M8 16.5 L5 19.5 M28 16.5 L31 19.5 M31 16.5 L28 19.5" stroke="#5a5aff" stroke-width=".8"/><circle cx="12" cy="18" r="2" fill="#f00"/><circle cx="23" cy="18" r="2" fill="#f00"/></g><rect x="36.6" y="573.3000000000001" width="33.4" height="33.5" fill="url(#lb)" stroke="#8a8a8a" stroke-width="1.3"/><g transform="translate(36,572.7)"><path d="M5.5 28.5 L14.5 21 M20 15.5 L29 7" stroke="#1a1a1a" stroke-width="1.3"/><circle cx="17.2" cy="18.2" r="2" fill="#f00"/></g><rect x="1.9" y="617.2" width="33.5" height="33.5" fill="url(#lb)" stroke="#8a8a8a" stroke-width="1.3"/><g transform="translate(1.3,616.6)"><rect x="6.2" y="10" width="24" height="12.5" fill="#fff" stroke="#1a1a1a" stroke-width="1.2"/><text x="9" y="21" font-family="Liberation Serif" font-size="13" fill="#111">A</text><path d="M20.5 12 V21" stroke="#111" stroke-width="1"/></g><rect x="36.6" y="617.2" width="33.4" height="33.5" fill="url(#lb)" stroke="#8a8a8a" stroke-width="1.3"/><g transform="translate(36,616.6)"><rect x="4" y="10.5" width="26.5" height="13" fill="#fff" stroke="#1a1a1a" stroke-width="1"/><path d="M18 10.5 V23.5" stroke="#1a1a1a" stroke-width=".8"/><circle cx="11" cy="17" r="3.2" fill="none" stroke="#111" stroke-width="1.1"/><path d="M6 17 H16 M11 12 V22" stroke="#111" stroke-width=".9"/><text x="20" y="22" font-family="Liberation Sans" font-size="9" fill="#111">.1</text><path d="M13 14 L25 3 L27 5 L15 16 Z" fill="#f0b030" stroke="#7a4a10" stroke-width=".6"/><path d="M25 3 L27 1.5 L28.5 3.5 L27 5 Z" fill="#e02020"/></g><rect x="1.9" y="651.9000000000001" width="33.5" height="33.5" fill="url(#lb)" stroke="#8a8a8a" stroke-width="1.3"/><g transform="translate(1.3,651.3000000000001)"><path d="M6 28 L9 17 L26 17 L26 28 Z" fill="#fff" stroke="#1a1a1a" stroke-width="1"/><path d="M8 24 L14 18 M8 28 L19 18 M13 28 L23 18 M18 28 L26 20 M22 28 L26 24" stroke="#333" stroke-width=".8"/><circle cx="19" cy="24" r="3" fill="#fff" stroke="#111" stroke-width="1"/><path d="M18 20 L28 9 L30 11 L20 22 Z" fill="#f0b030" stroke="#7a4a10" stroke-width=".6"/><path d="M28 9 L29.5 7.5 L31.5 9.5 L30 11 Z" fill="#e02020"/></g><rect x="1.9" y="695.1" width="33.5" height="33.5" fill="url(#lb)" stroke="#8a8a8a" stroke-width="1.3"/><g transform="translate(1.3,694.5)"><path d="M18 12 L23 9 L31 26 L26 29 Z" fill="#d85a5a" stroke="#b04040" stroke-width=".6"/><path d="M20.5 10.5 Q16 4 12 10" fill="none" stroke="#777" stroke-width=".9"/><circle cx="8" cy="13" r="2.6" fill="#f4e040"/><path d="M8 8 V18 M3 13 H13 M4.5 9.5 L11.5 16.5 M11.5 9.5 L4.5 16.5" stroke="#e8d020" stroke-width=".8"/></g><rect x="1.9" y="738.4" width="33.5" height="33.5" fill="url(#lb)" stroke="#8a8a8a" stroke-width="1.3"/><g transform="translate(1.3,737.8)"><rect x="21" y="7" width="8.5" height="8.5" fill="#8a8a8a" stroke="#666" stroke-width=".6"/><rect x="6" y="21" width="8.5" height="8.5" fill="#8a8a8a" stroke="#666" stroke-width=".6"/><rect x="10" y="12" width="16" height="12" fill="#f6f0d8" stroke="#777" stroke-width=".7"/></g><rect x="36.6" y="738.4" width="33.4" height="33.5" fill="url(#lb)" stroke="#8a8a8a" stroke-width="1.3"/><g transform="translate(36,737.8)"><rect x="21" y="7" width="8.5" height="8.5" fill="#8a8a8a" stroke="#666" stroke-width=".6"/><rect x="6" y="21" width="8.5" height="8.5" fill="#8a8a8a" stroke="#666" stroke-width=".6"/><rect x="10" y="12" width="16" height="12" fill="#f6f0d8" stroke="#777" stroke-width=".7"/></g><rect x="1.9" y="781.1" width="33.5" height="33.5" fill="url(#lb)" stroke="#8a8a8a" stroke-width="1.3"/><g transform="translate(1.3,780.5)"><rect x="6" y="5" width="18" height="7.5" rx="2" fill="#f4d060" stroke="#a08020" stroke-width=".7"/><path d="M24 8.5 H27 V15 H16 V20" fill="none" stroke="#666" stroke-width="1"/></g></svg>
<div class="a" style="left:72px;top:108px;width:1082px;height:24px;background:#d5d5d5"></div>
<div class="t" style="left:608px;top:113.02px;font-size:12.5px;color:#1a1a1a;">offset.dxf</div>
<div class="a" style="left:72px;top:132px;width:1082px;height:23px;background:#ececec"></div>
<div class="a" style="left:72px;top:155px;width:23px;height:577px;background:#ececec"></div>
<div class="a" style="left:1139px;top:155px;width:15px;height:577px;background:#fafafa"></div>
<div class="a" style="left:95px;top:732px;width:1059px;height:16px;background:#fafafa"></div><div class="a" style="left:72px;top:746px;width:1082px;height:2px;background:#ececec"></div>
<div class="a" style="left:72px;top:732px;width:23px;height:16px;background:#ececec"></div>
<div class="a" style="left:1099px;top:732px;width:55px;height:16px;background:#ebebeb"></div>
<div class="t" style="left:1118px;top:734px;font-size:12px;color:#111">1 &lt; 10</div>
<div class="a" style="left:243px;top:736px;width:685px;height:8px;border-radius:4px;background:#7f7f7f"></div>
<div class="a" style="left:1143px;top:286px;width:8px;height:320px;border-radius:4px;background:#7f7f7f"></div>
<svg class="a" style="left:95px;top:155px" width="1044" height="577" viewBox="95 155 1044 577"><rect x="95" y="155" width="1044" height="577" fill="#000"/><line x1="140.0" y1="155" x2="140.0" y2="732" stroke="#161616" stroke-width="1.6"/><line x1="365.0" y1="155" x2="365.0" y2="732" stroke="#161616" stroke-width="1.6"/><line x1="590.0" y1="155" x2="590.0" y2="732" stroke="#161616" stroke-width="1.6"/><line x1="815.0" y1="155" x2="815.0" y2="732" stroke="#161616" stroke-width="1.6"/><line x1="1040.0" y1="155" x2="1040.0" y2="732" stroke="#161616" stroke-width="1.6"/><line x1="95" y1="552.0" x2="1139" y2="552.0" stroke="#161616" stroke-width="1.6"/><line x1="95" y1="327.0" x2="1139" y2="327.0" stroke="#161616" stroke-width="1.6"/><path fill="#474747" d="M95 709h1v1h-1zM95 687h1v1h-1zM95 664h1v1h-1zM95 642h1v1h-1zM95 619h1v1h-1zM95 597h1v1h-1zM95 574h1v1h-1zM95 552h1v1h-1zM95 529h1v1h-1zM95 507h1v1h-1zM95 484h1v1h-1zM95 462h1v1h-1zM95 439h1v1h-1zM95 417h1v1h-1zM95 394h1v1h-1zM95 372h1v1h-1zM95 349h1v1h-1zM95 327h1v1h-1zM95 304h1v1h-1zM95 282h1v1h-1zM95 259h1v1h-1zM95 237h1v1h-1zM95 214h1v1h-1zM95 192h1v1h-1zM95 169h1v1h-1zM117 709h1v1h-1zM117 687h1v1h-1zM117 664h1v1h-1zM117 642h1v1h-1zM117 619h1v1h-1zM117 597h1v1h-1zM117 574h1v1h-1zM117 552h1v1h-1zM117 529h1v1h-1zM117 507h1v1h-1zM117 484h1v1h-1zM117 462h1v1h-1zM117 439h1v1h-1zM117 417h1v1h-1zM117 394h1v1h-1zM117 372h1v1h-1zM117 349h1v1h-1zM117 327h1v1h-1zM117 304h1v1h-1zM117 282h1v1h-1zM117 259h1v1h-1zM117 237h1v1h-1zM117 214h1v1h-1zM117 192h1v1h-1zM117 169h1v1h-1zM140 709h1v1h-1zM140 687h1v1h-1zM140 664h1v1h-1zM140 642h1v1h-1zM140 619h1v1h-1zM140 597h1v1h-1zM140 574h1v1h-1zM140 552h1v1h-1zM140 529h1v1h-1zM140 507h1v1h-1zM140 484h1v1h-1zM140 462h1v1h-1zM140 439h1v1h-1zM140 417h1v1h-1zM140 394h1v1h-1zM140 372h1v1h-1zM140 349h1v1h-1zM140 327h1v1h-1zM140 304h1v1h-1zM140 282h1v1h-1zM140 259h1v1h-1zM140 237h1v1h-1zM140 214h1v1h-1zM140 192h1v1h-1zM140 169h1v1h-1zM162 709h1v1h-1zM162 687h1v1h-1zM162 664h1v1h-1zM162 642h1v1h-1zM162 619h1v1h-1zM162 597h1v1h-1zM162 574h1v1h-1zM162 552h1v1h-1zM162 529h1v1h-1zM162 507h1v1h-1zM162 484h1v1h-1zM162 462h1v1h-1zM162 439h1v1h-1zM162 417h1v1h-1zM162 394h1v1h-1zM162 372h1v1h-1zM162 349h1v1h-1zM162 327h1v1h-1zM162 304h1v1h-1zM162 282h1v1h-1zM162 259h1v1h-1zM162 237h1v1h-1zM162 214h1v1h-1zM162 192h1v1h-1zM162 169h1v1h-1zM185 709h1v1h-1zM185 687h1v1h-1zM185 664h1v1h-1zM185 642h1v1h-1zM185 619h1v1h-1zM185 597h1v1h-1zM185 574h1v1h-1zM185 552h1v1h-1zM185 529h1v1h-1zM185 507h1v1h-1zM185 484h1v1h-1zM185 462h1v1h-1zM185 439h1v1h-1zM185 417h1v1h-1zM185 394h1v1h-1zM185 372h1v1h-1zM185 349h1v1h-1zM185 327h1v1h-1zM185 304h1v1h-1zM185 282h1v1h-1zM185 259h1v1h-1zM185 237h1v1h-1zM185 214h1v1h-1zM185 192h1v1h-1zM185 169h1v1h-1zM207 709h1v1h-1zM207 687h1v1h-1zM207 664h1v1h-1zM207 642h1v1h-1zM207 619h1v1h-1zM207 597h1v1h-1zM207 574h1v1h-1zM207 552h1v1h-1zM207 529h1v1h-1zM207 507h1v1h-1zM207 484h1v1h-1zM207 462h1v1h-1zM207 439h1v1h-1zM207 417h1v1h-1zM207 394h1v1h-1zM207 372h1v1h-1zM207 349h1v1h-1zM207 327h1v1h-1zM207 304h1v1h-1zM207 282h1v1h-1zM207 259h1v1h-1zM207 237h1v1h-1zM207 214h1v1h-1zM207 192h1v1h-1zM207 169h1v1h-1zM230 709h1v1h-1zM230 687h1v1h-1zM230 664h1v1h-1zM230 642h1v1h-1zM230 619h1v1h-1zM230 597h1v1h-1zM230 574h1v1h-1zM230 552h1v1h-1zM230 529h1v1h-1zM230 507h1v1h-1zM230 484h1v1h-1zM230 462h1v1h-1zM230 439h1v1h-1zM230 417h1v1h-1zM230 394h1v1h-1zM230 372h1v1h-1zM230 349h1v1h-1zM230 327h1v1h-1zM230 304h1v1h-1zM230 282h1v1h-1zM230 259h1v1h-1zM230 237h1v1h-1zM230 214h1v1h-1zM230 192h1v1h-1zM230 169h1v1h-1zM252 709h1v1h-1zM252 687h1v1h-1zM252 664h1v1h-1zM252 642h1v1h-1zM252 619h1v1h-1zM252 597h1v1h-1zM252 574h1v1h-1zM252 552h1v1h-1zM252 529h1v1h-1zM252 507h1v1h-1zM252 484h1v1h-1zM252 462h1v1h-1zM252 439h1v1h-1zM252 417h1v1h-1zM252 394h1v1h-1zM252 372h1v1h-1zM252 349h1v1h-1zM252 327h1v1h-1zM252 304h1v1h-1zM252 282h1v1h-1zM252 259h1v1h-1zM252 237h1v1h-1zM252 214h1v1h-1zM252 192h1v1h-1zM252 169h1v1h-1zM275 709h1v1h-1zM275 687h1v1h-1zM275 664h1v1h-1zM275 642h1v1h-1zM275 619h1v1h-1zM275 597h1v1h-1zM275 574h1v1h-1zM275 552h1v1h-1zM275 529h1v1h-1zM275 507h1v1h-1zM275 484h1v1h-1zM275 462h1v1h-1zM275 439h1v1h-1zM275 417h1v1h-1zM275 394h1v1h-1zM275 372h1v1h-1zM275 349h1v1h-1zM275 327h1v1h-1zM275 304h1v1h-1zM275 282h1v1h-1zM275 259h1v1h-1zM275 237h1v1h-1zM275 214h1v1h-1zM275 192h1v1h-1zM275 169h1v1h-1zM297 709h1v1h-1zM297 687h1v1h-1zM297 664h1v1h-1zM297 642h1v1h-1zM297 619h1v1h-1zM297 597h1v1h-1zM297 574h1v1h-1zM297 552h1v1h-1zM297 529h1v1h-1zM297 507h1v1h-1zM297 484h1v1h-1zM297 462h1v1h-1zM297 439h1v1h-1zM297 417h1v1h-1zM297 394h1v1h-1zM297 372h1v1h-1zM297 349h1v1h-1zM297 327h1v1h-1zM297 304h1v1h-1zM297 282h1v1h-1zM297 259h1v1h-1zM297 237h1v1h-1zM297 214h1v1h-1zM297 192h1v1h-1zM297 169h1v1h-1zM320 709h1v1h-1zM320 687h1v1h-1zM320 664h1v1h-1zM320 642h1v1h-1zM320 619h1v1h-1zM320 597h1v1h-1zM320 574h1v1h-1zM320 552h1v1h-1zM320 529h1v1h-1zM320 507h1v1h-1zM320 484h1v1h-1zM320 462h1v1h-1zM320 439h1v1h-1zM320 417h1v1h-1zM320 394h1v1h-1zM320 372h1v1h-1zM320 349h1v1h-1zM320 327h1v1h-1zM320 304h1v1h-1zM320 282h1v1h-1zM320 259h1v1h-1zM320 237h1v1h-1zM320 214h1v1h-1zM320 192h1v1h-1zM320 169h1v1h-1zM342 709h1v1h-1zM342 687h1v1h-1zM342 664h1v1h-1zM342 642h1v1h-1zM342 619h1v1h-1zM342 597h1v1h-1zM342 574h1v1h-1zM342 552h1v1h-1zM342 529h1v1h-1zM342 507h1v1h-1zM342 484h1v1h-1zM342 462h1v1h-1zM342 439h1v1h-1zM342 417h1v1h-1zM342 394h1v1h-1zM342 372h1v1h-1zM342 349h1v1h-1zM342 327h1v1h-1zM342 304h1v1h-1zM342 282h1v1h-1zM342 259h1v1h-1zM342 237h1v1h-1zM342 214h1v1h-1zM342 192h1v1h-1zM342 169h1v1h-1zM365 709h1v1h-1zM365 687h1v1h-1zM365 664h1v1h-1zM365 642h1v1h-1zM365 619h1v1h-1zM365 597h1v1h-1zM365 574h1v1h-1zM365 552h1v1h-1zM365 529h1v1h-1zM365 507h1v1h-1zM365 484h1v1h-1zM365 462h1v1h-1zM365 439h1v1h-1zM365 417h1v1h-1zM365 394h1v1h-1zM365 372h1v1h-1zM365 349h1v1h-1zM365 327h1v1h-1zM365 304h1v1h-1zM365 282h1v1h-1zM365 259h1v1h-1zM365 237h1v1h-1zM365 214h1v1h-1zM365 192h1v1h-1zM365 169h1v1h-1zM387 709h1v1h-1zM387 687h1v1h-1zM387 664h1v1h-1zM387 642h1v1h-1zM387 619h1v1h-1zM387 597h1v1h-1zM387 574h1v1h-1zM387 552h1v1h-1zM387 529h1v1h-1zM387 507h1v1h-1zM387 484h1v1h-1zM387 462h1v1h-1zM387 439h1v1h-1zM387 417h1v1h-1zM387 394h1v1h-1zM387 372h1v1h-1zM387 349h1v1h-1zM387 327h1v1h-1zM387 304h1v1h-1zM387 282h1v1h-1zM387 259h1v1h-1zM387 237h1v1h-1zM387 214h1v1h-1zM387 192h1v1h-1zM387 169h1v1h-1zM410 709h1v1h-1zM410 687h1v1h-1zM410 664h1v1h-1zM410 642h1v1h-1zM410 619h1v1h-1zM410 597h1v1h-1zM410 574h1v1h-1zM410 552h1v1h-1zM410 529h1v1h-1zM410 507h1v1h-1zM410 484h1v1h-1zM410 462h1v1h-1zM410 439h1v1h-1zM410 417h1v1h-1zM410 394h1v1h-1zM410 372h1v1h-1zM410 349h1v1h-1zM410 327h1v1h-1zM410 304h1v1h-1zM410 282h1v1h-1zM410 259h1v1h-1zM410 237h1v1h-1zM410 214h1v1h-1zM410 192h1v1h-1zM410 169h1v1h-1zM432 709h1v1h-1zM432 687h1v1h-1zM432 664h1v1h-1zM432 642h1v1h-1zM432 619h1v1h-1zM432 597h1v1h-1zM432 574h1v1h-1zM432 552h1v1h-1zM432 529h1v1h-1zM432 507h1v1h-1zM432 484h1v1h-1zM432 462h1v1h-1zM432 439h1v1h-1zM432 417h1v1h-1zM432 394h1v1h-1zM432 372h1v1h-1zM432 349h1v1h-1zM432 327h1v1h-1zM432 304h1v1h-1zM432 282h1v1h-1zM432 259h1v1h-1zM432 237h1v1h-1zM432 214h1v1h-1zM432 192h1v1h-1zM432 169h1v1h-1zM455 709h1v1h-1zM455 687h1v1h-1zM455 664h1v1h-1zM455 642h1v1h-1zM455 619h1v1h-1zM455 597h1v1h-1zM455 574h1v1h-1zM455 552h1v1h-1zM455 529h1v1h-1zM455 507h1v1h-1zM455 484h1v1h-1zM455 462h1v1h-1zM455 439h1v1h-1zM455 417h1v1h-1zM455 394h1v1h-1zM455 372h1v1h-1zM455 349h1v1h-1zM455 327h1v1h-1zM455 304h1v1h-1zM455 282h1v1h-1zM455 259h1v1h-1zM455 237h1v1h-1zM455 214h1v1h-1zM455 192h1v1h-1zM455 169h1v1h-1zM477 709h1v1h-1zM477 687h1v1h-1zM477 664h1v1h-1zM477 642h1v1h-1zM477 619h1v1h-1zM477 597h1v1h-1zM477 574h1v1h-1zM477 552h1v1h-1zM477 529h1v1h-1zM477 507h1v1h-1zM477 484h1v1h-1zM477 462h1v1h-1zM477 439h1v1h-1zM477 417h1v1h-1zM477 394h1v1h-1zM477 372h1v1h-1zM477 349h1v1h-1zM477 327h1v1h-1zM477 304h1v1h-1zM477 282h1v1h-1zM477 259h1v1h-1zM477 237h1v1h-1zM477 214h1v1h-1zM477 192h1v1h-1zM477 169h1v1h-1zM500 709h1v1h-1zM500 687h1v1h-1zM500 664h1v1h-1zM500 642h1v1h-1zM500 619h1v1h-1zM500 597h1v1h-1zM500 574h1v1h-1zM500 552h1v1h-1zM500 529h1v1h-1zM500 507h1v1h-1zM500 484h1v1h-1zM500 462h1v1h-1zM500 439h1v1h-1zM500 417h1v1h-1zM500 394h1v1h-1zM500 372h1v1h-1zM500 349h1v1h-1zM500 327h1v1h-1zM500 304h1v1h-1zM500 282h1v1h-1zM500 259h1v1h-1zM500 237h1v1h-1zM500 214h1v1h-1zM500 192h1v1h-1zM500 169h1v1h-1zM522 709h1v1h-1zM522 687h1v1h-1zM522 664h1v1h-1zM522 642h1v1h-1zM522 619h1v1h-1zM522 597h1v1h-1zM522 574h1v1h-1zM522 552h1v1h-1zM522 529h1v1h-1zM522 507h1v1h-1zM522 484h1v1h-1zM522 462h1v1h-1zM522 439h1v1h-1zM522 417h1v1h-1zM522 394h1v1h-1zM522 372h1v1h-1zM522 349h1v1h-1zM522 327h1v1h-1zM522 304h1v1h-1zM522 282h1v1h-1zM522 259h1v1h-1zM522 237h1v1h-1zM522 214h1v1h-1zM522 192h1v1h-1zM522 169h1v1h-1zM545 709h1v1h-1zM545 687h1v1h-1zM545 664h1v1h-1zM545 642h1v1h-1zM545 619h1v1h-1zM545 597h1v1h-1zM545 574h1v1h-1zM545 552h1v1h-1zM545 529h1v1h-1zM545 507h1v1h-1zM545 484h1v1h-1zM545 462h1v1h-1zM545 439h1v1h-1zM545 417h1v1h-1zM545 394h1v1h-1zM545 372h1v1h-1zM545 349h1v1h-1zM545 327h1v1h-1zM545 304h1v1h-1zM545 282h1v1h-1zM545 259h1v1h-1zM545 237h1v1h-1zM545 214h1v1h-1zM545 192h1v1h-1zM545 169h1v1h-1zM567 709h1v1h-1zM567 687h1v1h-1zM567 664h1v1h-1zM567 642h1v1h-1zM567 619h1v1h-1zM567 597h1v1h-1zM567 574h1v1h-1zM567 552h1v1h-1zM567 529h1v1h-1zM567 507h1v1h-1zM567 484h1v1h-1zM567 462h1v1h-1zM567 439h1v1h-1zM567 417h1v1h-1zM567 394h1v1h-1zM567 372h1v1h-1zM567 349h1v1h-1zM567 327h1v1h-1zM567 304h1v1h-1zM567 282h1v1h-1zM567 259h1v1h-1zM567 237h1v1h-1zM567 214h1v1h-1zM567 192h1v1h-1zM567 169h1v1h-1zM590 709h1v1h-1zM590 687h1v1h-1zM590 664h1v1h-1zM590 642h1v1h-1zM590 619h1v1h-1zM590 597h1v1h-1zM590 574h1v1h-1zM590 552h1v1h-1zM590 529h1v1h-1zM590 507h1v1h-1zM590 484h1v1h-1zM590 462h1v1h-1zM590 439h1v1h-1zM590 417h1v1h-1zM590 394h1v1h-1zM590 372h1v1h-1zM590 349h1v1h-1zM590 327h1v1h-1zM590 304h1v1h-1zM590 282h1v1h-1zM590 259h1v1h-1zM590 237h1v1h-1zM590 214h1v1h-1zM590 192h1v1h-1zM590 169h1v1h-1zM612 709h1v1h-1zM612 687h1v1h-1zM612 664h1v1h-1zM612 642h1v1h-1zM612 619h1v1h-1zM612 597h1v1h-1zM612 574h1v1h-1zM612 552h1v1h-1zM612 529h1v1h-1zM612 507h1v1h-1zM612 484h1v1h-1zM612 462h1v1h-1zM612 439h1v1h-1zM612 417h1v1h-1zM612 394h1v1h-1zM612 372h1v1h-1zM612 349h1v1h-1zM612 327h1v1h-1zM612 304h1v1h-1zM612 282h1v1h-1zM612 259h1v1h-1zM612 237h1v1h-1zM612 214h1v1h-1zM612 192h1v1h-1zM612 169h1v1h-1zM635 709h1v1h-1zM635 687h1v1h-1zM635 664h1v1h-1zM635 642h1v1h-1zM635 619h1v1h-1zM635 597h1v1h-1zM635 574h1v1h-1zM635 552h1v1h-1zM635 529h1v1h-1zM635 507h1v1h-1zM635 484h1v1h-1zM635 462h1v1h-1zM635 439h1v1h-1zM635 417h1v1h-1zM635 394h1v1h-1zM635 372h1v1h-1zM635 349h1v1h-1zM635 327h1v1h-1zM635 304h1v1h-1zM635 282h1v1h-1zM635 259h1v1h-1zM635 237h1v1h-1zM635 214h1v1h-1zM635 192h1v1h-1zM635 169h1v1h-1zM657 709h1v1h-1zM657 687h1v1h-1zM657 664h1v1h-1zM657 642h1v1h-1zM657 619h1v1h-1zM657 597h1v1h-1zM657 574h1v1h-1zM657 552h1v1h-1zM657 529h1v1h-1zM657 507h1v1h-1zM657 484h1v1h-1zM657 462h1v1h-1zM657 439h1v1h-1zM657 417h1v1h-1zM657 394h1v1h-1zM657 372h1v1h-1zM657 349h1v1h-1zM657 327h1v1h-1zM657 304h1v1h-1zM657 282h1v1h-1zM657 259h1v1h-1zM657 237h1v1h-1zM657 214h1v1h-1zM657 192h1v1h-1zM657 169h1v1h-1zM680 709h1v1h-1zM680 687h1v1h-1zM680 664h1v1h-1zM680 642h1v1h-1zM680 619h1v1h-1zM680 597h1v1h-1zM680 574h1v1h-1zM680 552h1v1h-1zM680 529h1v1h-1zM680 507h1v1h-1zM680 484h1v1h-1zM680 462h1v1h-1zM680 439h1v1h-1zM680 417h1v1h-1zM680 394h1v1h-1zM680 372h1v1h-1zM680 349h1v1h-1zM680 327h1v1h-1zM680 304h1v1h-1zM680 282h1v1h-1zM680 259h1v1h-1zM680 237h1v1h-1zM680 214h1v1h-1zM680 192h1v1h-1zM680 169h1v1h-1zM702 709h1v1h-1zM702 687h1v1h-1zM702 664h1v1h-1zM702 642h1v1h-1zM702 619h1v1h-1zM702 597h1v1h-1zM702 574h1v1h-1zM702 552h1v1h-1zM702 529h1v1h-1zM702 507h1v1h-1zM702 484h1v1h-1zM702 462h1v1h-1zM702 439h1v1h-1zM702 417h1v1h-1zM702 394h1v1h-1zM702 372h1v1h-1zM702 349h1v1h-1zM702 327h1v1h-1zM702 304h1v1h-1zM702 282h1v1h-1zM702 259h1v1h-1zM702 237h1v1h-1zM702 214h1v1h-1zM702 192h1v1h-1zM702 169h1v1h-1zM725 709h1v1h-1zM725 687h1v1h-1zM725 664h1v1h-1zM725 642h1v1h-1zM725 619h1v1h-1zM725 597h1v1h-1zM725 574h1v1h-1zM725 552h1v1h-1zM725 529h1v1h-1zM725 507h1v1h-1zM725 484h1v1h-1zM725 462h1v1h-1zM725 439h1v1h-1zM725 417h1v1h-1zM725 394h1v1h-1zM725 372h1v1h-1zM725 349h1v1h-1zM725 327h1v1h-1zM725 304h1v1h-1zM725 282h1v1h-1zM725 259h1v1h-1zM725 237h1v1h-1zM725 214h1v1h-1zM725 192h1v1h-1zM725 169h1v1h-1zM747 709h1v1h-1zM747 687h1v1h-1zM747 664h1v1h-1zM747 642h1v1h-1zM747 619h1v1h-1zM747 597h1v1h-1zM747 574h1v1h-1zM747 552h1v1h-1zM747 529h1v1h-1zM747 507h1v1h-1zM747 484h1v1h-1zM747 462h1v1h-1zM747 439h1v1h-1zM747 417h1v1h-1zM747 394h1v1h-1zM747 372h1v1h-1zM747 349h1v1h-1zM747 327h1v1h-1zM747 304h1v1h-1zM747 282h1v1h-1zM747 259h1v1h-1zM747 237h1v1h-1zM747 214h1v1h-1zM747 192h1v1h-1zM747 169h1v1h-1zM770 709h1v1h-1zM770 687h1v1h-1zM770 664h1v1h-1zM770 642h1v1h-1zM770 619h1v1h-1zM770 597h1v1h-1zM770 574h1v1h-1zM770 552h1v1h-1zM770 529h1v1h-1zM770 507h1v1h-1zM770 484h1v1h-1zM770 462h1v1h-1zM770 439h1v1h-1zM770 417h1v1h-1zM770 394h1v1h-1zM770 372h1v1h-1zM770 349h1v1h-1zM770 327h1v1h-1zM770 304h1v1h-1zM770 282h1v1h-1zM770 259h1v1h-1zM770 237h1v1h-1zM770 214h1v1h-1zM770 192h1v1h-1zM770 169h1v1h-1zM792 709h1v1h-1zM792 687h1v1h-1zM792 664h1v1h-1zM792 642h1v1h-1zM792 619h1v1h-1zM792 597h1v1h-1zM792 574h1v1h-1zM792 552h1v1h-1zM792 529h1v1h-1zM792 507h1v1h-1zM792 484h1v1h-1zM792 462h1v1h-1zM792 439h1v1h-1zM792 417h1v1h-1zM792 394h1v1h-1zM792 372h1v1h-1zM792 349h1v1h-1zM792 327h1v1h-1zM792 304h1v1h-1zM792 282h1v1h-1zM792 259h1v1h-1zM792 237h1v1h-1zM792 214h1v1h-1zM792 192h1v1h-1zM792 169h1v1h-1zM815 709h1v1h-1zM815 687h1v1h-1zM815 664h1v1h-1zM815 642h1v1h-1zM815 619h1v1h-1zM815 597h1v1h-1zM815 574h1v1h-1zM815 552h1v1h-1zM815 529h1v1h-1zM815 507h1v1h-1zM815 484h1v1h-1zM815 462h1v1h-1zM815 439h1v1h-1zM815 417h1v1h-1zM815 394h1v1h-1zM815 372h1v1h-1zM815 349h1v1h-1zM815 327h1v1h-1zM815 304h1v1h-1zM815 282h1v1h-1zM815 259h1v1h-1zM815 237h1v1h-1zM815 214h1v1h-1zM815 192h1v1h-1zM815 169h1v1h-1zM837 709h1v1h-1zM837 687h1v1h-1zM837 664h1v1h-1zM837 642h1v1h-1zM837 619h1v1h-1zM837 597h1v1h-1zM837 574h1v1h-1zM837 552h1v1h-1zM837 529h1v1h-1zM837 507h1v1h-1zM837 484h1v1h-1zM837 462h1v1h-1zM837 439h1v1h-1zM837 417h1v1h-1zM837 394h1v1h-1zM837 372h1v1h-1zM837 349h1v1h-1zM837 327h1v1h-1zM837 304h1v1h-1zM837 282h1v1h-1zM837 259h1v1h-1zM837 237h1v1h-1zM837 214h1v1h-1zM837 192h1v1h-1zM837 169h1v1h-1zM860 709h1v1h-1zM860 687h1v1h-1zM860 664h1v1h-1zM860 642h1v1h-1zM860 619h1v1h-1zM860 597h1v1h-1zM860 574h1v1h-1zM860 552h1v1h-1zM860 529h1v1h-1zM860 507h1v1h-1zM860 484h1v1h-1zM860 462h1v1h-1zM860 439h1v1h-1zM860 417h1v1h-1zM860 394h1v1h-1zM860 372h1v1h-1zM860 349h1v1h-1zM860 327h1v1h-1zM860 304h1v1h-1zM860 282h1v1h-1zM860 259h1v1h-1zM860 237h1v1h-1zM860 214h1v1h-1zM860 192h1v1h-1zM860 169h1v1h-1zM882 709h1v1h-1zM882 687h1v1h-1zM882 664h1v1h-1zM882 642h1v1h-1zM882 619h1v1h-1zM882 597h1v1h-1zM882 574h1v1h-1zM882 552h1v1h-1zM882 529h1v1h-1zM882 507h1v1h-1zM882 484h1v1h-1zM882 462h1v1h-1zM882 439h1v1h-1zM882 417h1v1h-1zM882 394h1v1h-1zM882 372h1v1h-1zM882 349h1v1h-1zM882 327h1v1h-1zM882 304h1v1h-1zM882 282h1v1h-1zM882 259h1v1h-1zM882 237h1v1h-1zM882 214h1v1h-1zM882 192h1v1h-1zM882 169h1v1h-1zM905 709h1v1h-1zM905 687h1v1h-1zM905 664h1v1h-1zM905 642h1v1h-1zM905 619h1v1h-1zM905 597h1v1h-1zM905 574h1v1h-1zM905 552h1v1h-1zM905 529h1v1h-1zM905 507h1v1h-1zM905 484h1v1h-1zM905 462h1v1h-1zM905 439h1v1h-1zM905 417h1v1h-1zM905 394h1v1h-1zM905 372h1v1h-1zM905 349h1v1h-1zM905 327h1v1h-1zM905 304h1v1h-1zM905 282h1v1h-1zM905 259h1v1h-1zM905 237h1v1h-1zM905 214h1v1h-1zM905 192h1v1h-1zM905 169h1v1h-1zM927 709h1v1h-1zM927 687h1v1h-1zM927 664h1v1h-1zM927 642h1v1h-1zM927 619h1v1h-1zM927 597h1v1h-1zM927 574h1v1h-1zM927 552h1v1h-1zM927 529h1v1h-1zM927 507h1v1h-1zM927 484h1v1h-1zM927 462h1v1h-1zM927 439h1v1h-1zM927 417h1v1h-1zM927 394h1v1h-1zM927 372h1v1h-1zM927 349h1v1h-1zM927 327h1v1h-1zM927 304h1v1h-1zM927 282h1v1h-1zM927 259h1v1h-1zM927 237h1v1h-1zM927 214h1v1h-1zM927 192h1v1h-1zM927 169h1v1h-1zM950 709h1v1h-1zM950 687h1v1h-1zM950 664h1v1h-1zM950 642h1v1h-1zM950 619h1v1h-1zM950 597h1v1h-1zM950 574h1v1h-1zM950 552h1v1h-1zM950 529h1v1h-1zM950 507h1v1h-1zM950 484h1v1h-1zM950 462h1v1h-1zM950 439h1v1h-1zM950 417h1v1h-1zM950 394h1v1h-1zM950 372h1v1h-1zM950 349h1v1h-1zM950 327h1v1h-1zM950 304h1v1h-1zM950 282h1v1h-1zM950 259h1v1h-1zM950 237h1v1h-1zM950 214h1v1h-1zM950 192h1v1h-1zM950 169h1v1h-1zM972 709h1v1h-1zM972 687h1v1h-1zM972 664h1v1h-1zM972 642h1v1h-1zM972 619h1v1h-1zM972 597h1v1h-1zM972 574h1v1h-1zM972 552h1v1h-1zM972 529h1v1h-1zM972 507h1v1h-1zM972 484h1v1h-1zM972 462h1v1h-1zM972 439h1v1h-1zM972 417h1v1h-1zM972 394h1v1h-1zM972 372h1v1h-1zM972 349h1v1h-1zM972 327h1v1h-1zM972 304h1v1h-1zM972 282h1v1h-1zM972 259h1v1h-1zM972 237h1v1h-1zM972 214h1v1h-1zM972 192h1v1h-1zM972 169h1v1h-1zM995 709h1v1h-1zM995 687h1v1h-1zM995 664h1v1h-1zM995 642h1v1h-1zM995 619h1v1h-1zM995 597h1v1h-1zM995 574h1v1h-1zM995 552h1v1h-1zM995 529h1v1h-1zM995 507h1v1h-1zM995 484h1v1h-1zM995 462h1v1h-1zM995 439h1v1h-1zM995 417h1v1h-1zM995 394h1v1h-1zM995 372h1v1h-1zM995 349h1v1h-1zM995 327h1v1h-1zM995 304h1v1h-1zM995 282h1v1h-1zM995 259h1v1h-1zM995 237h1v1h-1zM995 214h1v1h-1zM995 192h1v1h-1zM995 169h1v1h-1zM1017 709h1v1h-1zM1017 687h1v1h-1zM1017 664h1v1h-1zM1017 642h1v1h-1zM1017 619h1v1h-1zM1017 597h1v1h-1zM1017 574h1v1h-1zM1017 552h1v1h-1zM1017 529h1v1h-1zM1017 507h1v1h-1zM1017 484h1v1h-1zM1017 462h1v1h-1zM1017 439h1v1h-1zM1017 417h1v1h-1zM1017 394h1v1h-1zM1017 372h1v1h-1zM1017 349h1v1h-1zM1017 327h1v1h-1zM1017 304h1v1h-1zM1017 282h1v1h-1zM1017 259h1v1h-1zM1017 237h1v1h-1zM1017 214h1v1h-1zM1017 192h1v1h-1zM1017 169h1v1h-1zM1040 709h1v1h-1zM1040 687h1v1h-1zM1040 664h1v1h-1zM1040 642h1v1h-1zM1040 619h1v1h-1zM1040 597h1v1h-1zM1040 574h1v1h-1zM1040 552h1v1h-1zM1040 529h1v1h-1zM1040 507h1v1h-1zM1040 484h1v1h-1zM1040 462h1v1h-1zM1040 439h1v1h-1zM1040 417h1v1h-1zM1040 394h1v1h-1zM1040 372h1v1h-1zM1040 349h1v1h-1zM1040 327h1v1h-1zM1040 304h1v1h-1zM1040 282h1v1h-1zM1040 259h1v1h-1zM1040 237h1v1h-1zM1040 214h1v1h-1zM1040 192h1v1h-1zM1040 169h1v1h-1zM1062 709h1v1h-1zM1062 687h1v1h-1zM1062 664h1v1h-1zM1062 642h1v1h-1zM1062 619h1v1h-1zM1062 597h1v1h-1zM1062 574h1v1h-1zM1062 552h1v1h-1zM1062 529h1v1h-1zM1062 507h1v1h-1zM1062 484h1v1h-1zM1062 462h1v1h-1zM1062 439h1v1h-1zM1062 417h1v1h-1zM1062 394h1v1h-1zM1062 372h1v1h-1zM1062 349h1v1h-1zM1062 327h1v1h-1zM1062 304h1v1h-1zM1062 282h1v1h-1zM1062 259h1v1h-1zM1062 237h1v1h-1zM1062 214h1v1h-1zM1062 192h1v1h-1zM1062 169h1v1h-1zM1085 709h1v1h-1zM1085 687h1v1h-1zM1085 664h1v1h-1zM1085 642h1v1h-1zM1085 619h1v1h-1zM1085 597h1v1h-1zM1085 574h1v1h-1zM1085 552h1v1h-1zM1085 529h1v1h-1zM1085 507h1v1h-1zM1085 484h1v1h-1zM1085 462h1v1h-1zM1085 439h1v1h-1zM1085 417h1v1h-1zM1085 394h1v1h-1zM1085 372h1v1h-1zM1085 349h1v1h-1zM1085 327h1v1h-1zM1085 304h1v1h-1zM1085 282h1v1h-1zM1085 259h1v1h-1zM1085 237h1v1h-1zM1085 214h1v1h-1zM1085 192h1v1h-1zM1085 169h1v1h-1zM1107 709h1v1h-1zM1107 687h1v1h-1zM1107 664h1v1h-1zM1107 642h1v1h-1zM1107 619h1v1h-1zM1107 597h1v1h-1zM1107 574h1v1h-1zM1107 552h1v1h-1zM1107 529h1v1h-1zM1107 507h1v1h-1zM1107 484h1v1h-1zM1107 462h1v1h-1zM1107 439h1v1h-1zM1107 417h1v1h-1zM1107 394h1v1h-1zM1107 372h1v1h-1zM1107 349h1v1h-1zM1107 327h1v1h-1zM1107 304h1v1h-1zM1107 282h1v1h-1zM1107 259h1v1h-1zM1107 237h1v1h-1zM1107 214h1v1h-1zM1107 192h1v1h-1zM1107 169h1v1h-1zM1130 709h1v1h-1zM1130 687h1v1h-1zM1130 664h1v1h-1zM1130 642h1v1h-1zM1130 619h1v1h-1zM1130 597h1v1h-1zM1130 574h1v1h-1zM1130 552h1v1h-1zM1130 529h1v1h-1zM1130 507h1v1h-1zM1130 484h1v1h-1zM1130 462h1v1h-1zM1130 439h1v1h-1zM1130 417h1v1h-1zM1130 394h1v1h-1zM1130 372h1v1h-1zM1130 349h1v1h-1zM1130 327h1v1h-1zM1130 304h1v1h-1zM1130 282h1v1h-1zM1130 259h1v1h-1zM1130 237h1v1h-1zM1130 214h1v1h-1zM1130 192h1v1h-1zM1130 169h1v1h-1z"/><path d="M500.3 327 A145.75 145.75 0 0 0 409.8 551.9" fill="none" stroke="#f2f2f2" stroke-width="1.35"/><circle cx="612.8" cy="439.5" r="112.5" fill="none" stroke="#f2f2f2" stroke-width="1.35"/><ellipse cx="815.1" cy="439.5" rx="36" ry="112.5" fill="none" stroke="#f2f2f2" stroke-width="1.35"/><path d="M995.5 327.0 C993.0 329.4 985.0 335.8 980.3 341.3 C975.6 346.8 970.8 353.9 967.5 359.8 C964.2 365.7 962.1 370.3 960.4 376.9 C958.6 383.5 957.6 392.5 957.0 399.6 C956.4 406.7 956.7 411.4 957.0 419.5 C957.3 427.6 958.6 439.4 959.0 447.9 C959.4 456.4 959.6 463.6 959.5 470.7 C959.4 477.8 959.1 484.0 958.1 490.6 C957.1 497.2 956.2 503.9 953.3 510.5 C950.4 517.1 946.0 524.6 940.5 530.3 C935.0 536.0 926.6 541.0 920.6 544.6 C914.6 548.2 907.4 550.7 904.7 551.9" fill="none" stroke="#f2f2f2" stroke-width="1.35"/><defs><radialGradient id="ring" gradientUnits="userSpaceOnUse" cx="315" cy="439" r="40"><stop offset="0" stop-color="#000" stop-opacity="0"/><stop offset=".72" stop-color="#000" stop-opacity="0"/><stop offset=".76" stop-color="#161b20"/><stop offset=".8" stop-color="#3e4a55"/><stop offset=".84" stop-color="#55636e"/><stop offset=".89" stop-color="#5c6a76"/><stop offset=".92" stop-color="#6d7c89"/><stop offset=".945" stop-color="#5a6773"/><stop offset=".97" stop-color="#7f8e9b"/><stop offset=".985" stop-color="#6a7783"/><stop offset="1" stop-color="#000" stop-opacity="0"/></radialGradient></defs><circle cx="315" cy="439" r="40" fill="url(#ring)"/><line x1="275" y1="552" x2="365" y2="327" stroke="#b0b0b0" stroke-width="1.6"/><line x1="264.4" y1="547.9" x2="354.5" y2="322.6" stroke="#ff0000" stroke-width="1.45" stroke-linecap="round"/><rect x="299.3" y="437.3" width="31.5" height="3.4" fill="#c4c4c4"/><rect x="313.3" y="423.3" width="3.6" height="31" fill="#c4c4c4"/><circle cx="315" cy="439" r="2.2" fill="#000" stroke="#888" stroke-width="0.8"/></svg>
<div class="a" style="left:95px;top:132px;width:1044px;height:23px;overflow:hidden"><div class="a" style="left:-95px;top:-132px;width:1200px;height:30px"><div class="a" style="left:95px;top:148px;width:1px;height:7px;background:#5a5a5a"></div><div class="t" style="left:80.15px;top:133.4px;width:30px;text-align:center;font-size:9.6px;letter-spacing:.3px;color:#111">38</div><div class="a" style="left:117px;top:148px;width:1px;height:7px;background:#5a5a5a"></div><div class="t" style="left:102.65px;top:133.4px;width:30px;text-align:center;font-size:9.6px;letter-spacing:.3px;color:#111">39</div><div class="a" style="left:140px;top:148px;width:1px;height:7px;background:#5a5a5a"></div><div class="t" style="left:125.15px;top:133.4px;width:30px;text-align:center;font-size:9.6px;letter-spacing:.3px;color:#111">40</div><div class="a" style="left:162px;top:148px;width:1px;height:7px;background:#5a5a5a"></div><div class="t" style="left:147.65px;top:133.4px;width:30px;text-align:center;font-size:9.6px;letter-spacing:.3px;color:#111">41</div><div class="a" style="left:185px;top:148px;width:1px;height:7px;background:#5a5a5a"></div><div class="t" style="left:170.15px;top:133.4px;width:30px;text-align:center;font-size:9.6px;letter-spacing:.3px;color:#111">42</div><div class="a" style="left:207px;top:148px;width:1px;height:7px;background:#5a5a5a"></div><div class="t" style="left:192.65px;top:133.4px;width:30px;text-align:center;font-size:9.6px;letter-spacing:.3px;color:#111">43</div><div class="a" style="left:230px;top:148px;width:1px;height:7px;background:#5a5a5a"></div><div class="t" style="left:215.15px;top:133.4px;width:30px;text-align:center;font-size:9.6px;letter-spacing:.3px;color:#111">44</div><div class="a" style="left:252px;top:148px;width:1px;height:7px;background:#5a5a5a"></div><div class="t" style="left:237.65px;top:133.4px;width:30px;text-align:center;font-size:9.6px;letter-spacing:.3px;color:#111">45</div><div class="a" style="left:275px;top:148px;width:1px;height:7px;background:#5a5a5a"></div><div class="t" style="left:260.15px;top:133.4px;width:30px;text-align:center;font-size:9.6px;letter-spacing:.3px;color:#111">46</div><div class="a" style="left:297px;top:148px;width:1px;height:7px;background:#5a5a5a"></div><div class="t" style="left:282.65px;top:133.4px;width:30px;text-align:center;font-size:9.6px;letter-spacing:.3px;color:#111">47</div><div class="a" style="left:320px;top:148px;width:1px;height:7px;background:#5a5a5a"></div><div class="t" style="left:305.15px;top:133.4px;width:30px;text-align:center;font-size:9.6px;letter-spacing:.3px;color:#111">48</div><div class="a" style="left:342px;top:148px;width:1px;height:7px;background:#5a5a5a"></div><div class="t" style="left:327.65px;top:133.4px;width:30px;text-align:center;font-size:9.6px;letter-spacing:.3px;color:#111">49</div><div class="a" style="left:365px;top:148px;width:1px;height:7px;background:#5a5a5a"></div><div class="t" style="left:350.15px;top:133.4px;width:30px;text-align:center;font-size:9.6px;letter-spacing:.3px;color:#111">50</div><div class="a" style="left:387px;top:148px;width:1px;height:7px;background:#5a5a5a"></div><div class="t" style="left:372.65px;top:133.4px;width:30px;text-align:center;font-size:9.6px;letter-spacing:.3px;color:#111">51</div><div class="a" style="left:410px;top:148px;width:1px;height:7px;background:#5a5a5a"></div><div class="t" style="left:395.15px;top:133.4px;width:30px;text-align:center;font-size:9.6px;letter-spacing:.3px;color:#111">52</div><div class="a" style="left:432px;top:148px;width:1px;height:7px;background:#5a5a5a"></div><div class="t" style="left:417.65px;top:133.4px;width:30px;text-align:center;font-size:9.6px;letter-spacing:.3px;color:#111">53</div><div class="a" style="left:455px;top:148px;width:1px;height:7px;background:#5a5a5a"></div><div class="t" style="left:440.15px;top:133.4px;width:30px;text-align:center;font-size:9.6px;letter-spacing:.3px;color:#111">54</div><div class="a" style="left:477px;top:148px;width:1px;height:7px;background:#5a5a5a"></div><div class="t" style="left:462.65px;top:133.4px;width:30px;text-align:center;font-size:9.6px;letter-spacing:.3px;color:#111">55</div><div class="a" style="left:500px;top:148px;width:1px;height:7px;background:#5a5a5a"></div><div class="t" style="left:485.15px;top:133.4px;width:30px;text-align:center;font-size:9.6px;letter-spacing:.3px;color:#111">56</div><div class="a" style="left:522px;top:148px;width:1px;height:7px;background:#5a5a5a"></div><div class="t" style="left:507.65px;top:133.4px;width:30px;text-align:center;font-size:9.6px;letter-spacing:.3px;color:#111">57</div><div class="a" style="left:545px;top:148px;width:1px;height:7px;background:#5a5a5a"></div><div class="t" style="left:530.15px;top:133.4px;width:30px;text-align:center;font-size:9.6px;letter-spacing:.3px;color:#111">58</div><div class="a" style="left:567px;top:148px;width:1px;height:7px;background:#5a5a5a"></div><div class="t" style="left:552.65px;top:133.4px;width:30px;text-align:center;font-size:9.6px;letter-spacing:.3px;color:#111">59</div><div class="a" style="left:590px;top:148px;width:1px;height:7px;background:#5a5a5a"></div><div class="t" style="left:575.15px;top:133.4px;width:30px;text-align:center;font-size:9.6px;letter-spacing:.3px;color:#111">60</div><div class="a" style="left:612px;top:148px;width:1px;height:7px;background:#5a5a5a"></div><div class="t" style="left:597.65px;top:133.4px;width:30px;text-align:center;font-size:9.6px;letter-spacing:.3px;color:#111">61</div><div class="a" style="left:635px;top:148px;width:1px;height:7px;background:#5a5a5a"></div><div class="t" style="left:620.15px;top:133.4px;width:30px;text-align:center;font-size:9.6px;letter-spacing:.3px;color:#111">62</div><div class="a" style="left:657px;top:148px;width:1px;height:7px;background:#5a5a5a"></div><div class="t" style="left:642.65px;top:133.4px;width:30px;text-align:center;font-size:9.6px;letter-spacing:.3px;color:#111">63</div><div class="a" style="left:680px;top:148px;width:1px;height:7px;background:#5a5a5a"></div><div class="t" style="left:665.15px;top:133.4px;width:30px;text-align:center;font-size:9.6px;letter-spacing:.3px;color:#111">64</div><div class="a" style="left:702px;top:148px;width:1px;height:7px;background:#5a5a5a"></div><div class="t" style="left:687.65px;top:133.4px;width:30px;text-align:center;font-size:9.6px;letter-spacing:.3px;color:#111">65</div><div class="a" style="left:725px;top:148px;width:1px;height:7px;background:#5a5a5a"></div><div class="t" style="left:710.15px;top:133.4px;width:30px;text-align:center;font-size:9.6px;letter-spacing:.3px;color:#111">66</div><div class="a" style="left:747px;top:148px;width:1px;height:7px;background:#5a5a5a"></div><div class="t" style="left:732.65px;top:133.4px;width:30px;text-align:center;font-size:9.6px;letter-spacing:.3px;color:#111">67</div><div class="a" style="left:770px;top:148px;width:1px;height:7px;background:#5a5a5a"></div><div class="t" style="left:755.15px;top:133.4px;width:30px;text-align:center;font-size:9.6px;letter-spacing:.3px;color:#111">68</div><div class="a" style="left:792px;top:148px;width:1px;height:7px;background:#5a5a5a"></div><div class="t" style="left:777.65px;top:133.4px;width:30px;text-align:center;font-size:9.6px;letter-spacing:.3px;color:#111">69</div><div class="a" style="left:815px;top:148px;width:1px;height:7px;background:#5a5a5a"></div><div class="t" style="left:800.15px;top:133.4px;width:30px;text-align:center;font-size:9.6px;letter-spacing:.3px;color:#111">70</div><div class="a" style="left:837px;top:148px;width:1px;height:7px;background:#5a5a5a"></div><div class="t" style="left:822.65px;top:133.4px;width:30px;text-align:center;font-size:9.6px;letter-spacing:.3px;color:#111">71</div><div class="a" style="left:860px;top:148px;width:1px;height:7px;background:#5a5a5a"></div><div class="t" style="left:845.15px;top:133.4px;width:30px;text-align:center;font-size:9.6px;letter-spacing:.3px;color:#111">72</div><div class="a" style="left:882px;top:148px;width:1px;height:7px;background:#5a5a5a"></div><div class="t" style="left:867.65px;top:133.4px;width:30px;text-align:center;font-size:9.6px;letter-spacing:.3px;color:#111">73</div><div class="a" style="left:905px;top:148px;width:1px;height:7px;background:#5a5a5a"></div><div class="t" style="left:890.15px;top:133.4px;width:30px;text-align:center;font-size:9.6px;letter-spacing:.3px;color:#111">74</div><div class="a" style="left:927px;top:148px;width:1px;height:7px;background:#5a5a5a"></div><div class="t" style="left:912.65px;top:133.4px;width:30px;text-align:center;font-size:9.6px;letter-spacing:.3px;color:#111">75</div><div class="a" style="left:950px;top:148px;width:1px;height:7px;background:#5a5a5a"></div><div class="t" style="left:935.15px;top:133.4px;width:30px;text-align:center;font-size:9.6px;letter-spacing:.3px;color:#111">76</div><div class="a" style="left:972px;top:148px;width:1px;height:7px;background:#5a5a5a"></div><div class="t" style="left:957.65px;top:133.4px;width:30px;text-align:center;font-size:9.6px;letter-spacing:.3px;color:#111">77</div><div class="a" style="left:995px;top:148px;width:1px;height:7px;background:#5a5a5a"></div><div class="t" style="left:980.15px;top:133.4px;width:30px;text-align:center;font-size:9.6px;letter-spacing:.3px;color:#111">78</div><div class="a" style="left:1017px;top:148px;width:1px;height:7px;background:#5a5a5a"></div><div class="t" style="left:1002.65px;top:133.4px;width:30px;text-align:center;font-size:9.6px;letter-spacing:.3px;color:#111">79</div><div class="a" style="left:1040px;top:148px;width:1px;height:7px;background:#5a5a5a"></div><div class="t" style="left:1025.15px;top:133.4px;width:30px;text-align:center;font-size:9.6px;letter-spacing:.3px;color:#111">80</div><div class="a" style="left:1062px;top:148px;width:1px;height:7px;background:#5a5a5a"></div><div class="t" style="left:1047.65px;top:133.4px;width:30px;text-align:center;font-size:9.6px;letter-spacing:.3px;color:#111">81</div><div class="a" style="left:1085px;top:148px;width:1px;height:7px;background:#5a5a5a"></div><div class="t" style="left:1070.15px;top:133.4px;width:30px;text-align:center;font-size:9.6px;letter-spacing:.3px;color:#111">82</div><div class="a" style="left:1107px;top:148px;width:1px;height:7px;background:#5a5a5a"></div><div class="t" style="left:1092.65px;top:133.4px;width:30px;text-align:center;font-size:9.6px;letter-spacing:.3px;color:#111">83</div><div class="a" style="left:1130px;top:148px;width:1px;height:7px;background:#5a5a5a"></div><div class="t" style="left:1115.15px;top:133.4px;width:30px;text-align:center;font-size:9.6px;letter-spacing:.3px;color:#111">84</div></div></div>
<div class="a" style="left:72px;top:155px;width:23px;height:577px;overflow:hidden"><div class="a" style="left:-72px;top:-155px;width:200px;height:900px"><div class="a" style="left:88px;top:732px;width:7px;height:1px;background:#5a5a5a"></div><div class="t" style="left:63.599999999999994px;top:727.4px;width:30px;height:10px;text-align:center;font-size:9.6px;letter-spacing:.3px;color:#111;transform:rotate(-90deg)">-8</div><div class="a" style="left:88px;top:709px;width:7px;height:1px;background:#5a5a5a"></div><div class="t" style="left:63.599999999999994px;top:704.9px;width:30px;height:10px;text-align:center;font-size:9.6px;letter-spacing:.3px;color:#111;transform:rotate(-90deg)">-7</div><div class="a" style="left:88px;top:687px;width:7px;height:1px;background:#5a5a5a"></div><div class="t" style="left:63.599999999999994px;top:682.4px;width:30px;height:10px;text-align:center;font-size:9.6px;letter-spacing:.3px;color:#111;transform:rotate(-90deg)">-6</div><div class="a" style="left:88px;top:664px;width:7px;height:1px;background:#5a5a5a"></div><div class="t" style="left:63.599999999999994px;top:659.9px;width:30px;height:10px;text-align:center;font-size:9.6px;letter-spacing:.3px;color:#111;transform:rotate(-90deg)">-5</div><div class="a" style="left:88px;top:642px;width:7px;height:1px;background:#5a5a5a"></div><div class="t" style="left:63.599999999999994px;top:637.4px;width:30px;height:10px;text-align:center;font-size:9.6px;letter-spacing:.3px;color:#111;transform:rotate(-90deg)">-4</div><div class="a" style="left:88px;top:619px;width:7px;height:1px;background:#5a5a5a"></div><div class="t" style="left:63.599999999999994px;top:614.9px;width:30px;height:10px;text-align:center;font-size:9.6px;letter-spacing:.3px;color:#111;transform:rotate(-90deg)">-3</div><div class="a" style="left:88px;top:597px;width:7px;height:1px;background:#5a5a5a"></div><div class="t" style="left:63.599999999999994px;top:592.4px;width:30px;height:10px;text-align:center;font-size:9.6px;letter-spacing:.3px;color:#111;transform:rotate(-90deg)">-2</div><div class="a" style="left:88px;top:574px;width:7px;height:1px;background:#5a5a5a"></div><div class="t" style="left:63.599999999999994px;top:569.9px;width:30px;height:10px;text-align:center;font-size:9.6px;letter-spacing:.3px;color:#111;transform:rotate(-90deg)">-1</div><div class="a" style="left:88px;top:552px;width:7px;height:1px;background:#5a5a5a"></div><div class="t" style="left:63.599999999999994px;top:547.4px;width:30px;height:10px;text-align:center;font-size:9.6px;letter-spacing:.3px;color:#111;transform:rotate(-90deg)">0</div><div class="a" style="left:88px;top:529px;width:7px;height:1px;background:#5a5a5a"></div><div class="t" style="left:63.599999999999994px;top:524.9px;width:30px;height:10px;text-align:center;font-size:9.6px;letter-spacing:.3px;color:#111;transform:rotate(-90deg)">1</div><div class="a" style="left:88px;top:507px;width:7px;height:1px;background:#5a5a5a"></div><div class="t" style="left:63.599999999999994px;top:502.4px;width:30px;height:10px;text-align:center;font-size:9.6px;letter-spacing:.3px;color:#111;transform:rotate(-90deg)">2</div><div class="a" style="left:88px;top:484px;width:7px;height:1px;background:#5a5a5a"></div><div class="t" style="left:63.599999999999994px;top:479.9px;width:30px;height:10px;text-align:center;font-size:9.6px;letter-spacing:.3px;color:#111;transform:rotate(-90deg)">3</div><div class="a" style="left:88px;top:462px;width:7px;height:1px;background:#5a5a5a"></div><div class="t" style="left:63.599999999999994px;top:457.4px;width:30px;height:10px;text-align:center;font-size:9.6px;letter-spacing:.3px;color:#111;transform:rotate(-90deg)">4</div><div class="a" style="left:88px;top:439px;width:7px;height:1px;background:#5a5a5a"></div><div class="t" style="left:63.599999999999994px;top:434.9px;width:30px;height:10px;text-align:center;font-size:9.6px;letter-spacing:.3px;color:#111;transform:rotate(-90deg)">5</div><div class="a" style="left:88px;top:417px;width:7px;height:1px;background:#5a5a5a"></div><div class="t" style="left:63.599999999999994px;top:412.4px;width:30px;height:10px;text-align:center;font-size:9.6px;letter-spacing:.3px;color:#111;transform:rotate(-90deg)">6</div><div class="a" style="left:88px;top:394px;width:7px;height:1px;background:#5a5a5a"></div><div class="t" style="left:63.599999999999994px;top:389.9px;width:30px;height:10px;text-align:center;font-size:9.6px;letter-spacing:.3px;color:#111;transform:rotate(-90deg)">7</div><div class="a" style="left:88px;top:372px;width:7px;height:1px;background:#5a5a5a"></div><div class="t" style="left:63.599999999999994px;top:367.4px;width:30px;height:10px;text-align:center;font-size:9.6px;letter-spacing:.3px;color:#111;transform:rotate(-90deg)">8</div><div class="a" style="left:88px;top:349px;width:7px;height:1px;background:#5a5a5a"></div><div class="t" style="left:63.599999999999994px;top:344.9px;width:30px;height:10px;text-align:center;font-size:9.6px;letter-spacing:.3px;color:#111;transform:rotate(-90deg)">9</div><div class="a" style="left:88px;top:327px;width:7px;height:1px;background:#5a5a5a"></div><div class="t" style="left:63.599999999999994px;top:322.4px;width:30px;height:10px;text-align:center;font-size:9.6px;letter-spacing:.3px;color:#111;transform:rotate(-90deg)">10</div><div class="a" style="left:88px;top:304px;width:7px;height:1px;background:#5a5a5a"></div><div class="t" style="left:63.599999999999994px;top:299.9px;width:30px;height:10px;text-align:center;font-size:9.6px;letter-spacing:.3px;color:#111;transform:rotate(-90deg)">11</div><div class="a" style="left:88px;top:282px;width:7px;height:1px;background:#5a5a5a"></div><div class="t" style="left:63.599999999999994px;top:277.4px;width:30px;height:10px;text-align:center;font-size:9.6px;letter-spacing:.3px;color:#111;transform:rotate(-90deg)">12</div><div class="a" style="left:88px;top:259px;width:7px;height:1px;background:#5a5a5a"></div><div class="t" style="left:63.599999999999994px;top:254.9px;width:30px;height:10px;text-align:center;font-size:9.6px;letter-spacing:.3px;color:#111;transform:rotate(-90deg)">13</div><div class="a" style="left:88px;top:237px;width:7px;height:1px;background:#5a5a5a"></div><div class="t" style="left:63.599999999999994px;top:232.4px;width:30px;height:10px;text-align:center;font-size:9.6px;letter-spacing:.3px;color:#111;transform:rotate(-90deg)">14</div><div class="a" style="left:88px;top:214px;width:7px;height:1px;background:#5a5a5a"></div><div class="t" style="left:63.599999999999994px;top:209.9px;width:30px;height:10px;text-align:center;font-size:9.6px;letter-spacing:.3px;color:#111;transform:rotate(-90deg)">15</div><div class="a" style="left:88px;top:192px;width:7px;height:1px;background:#5a5a5a"></div><div class="t" style="left:63.599999999999994px;top:187.4px;width:30px;height:10px;text-align:center;font-size:9.6px;letter-spacing:.3px;color:#111;transform:rotate(-90deg)">16</div><div class="a" style="left:88px;top:169px;width:7px;height:1px;background:#5a5a5a"></div><div class="t" style="left:63.599999999999994px;top:164.9px;width:30px;height:10px;text-align:center;font-size:9.6px;letter-spacing:.3px;color:#111;transform:rotate(-90deg)">17</div></div></div>
<svg class="a" style="left:308px;top:143px" width="14" height="8"><path d="M0.5 0.5H13L6.8 7.5z" fill="#111"/></svg>
<svg class="a" style="left:84px;top:432px" width="8" height="14"><path d="M0.5 0.5V13.5L7.5 7z" fill="#111"/></svg>
<div class="a" style="left:72px;top:748px;width:1082px;height:50px;background:#ececec"></div>
<div class="a" style="left:72px;top:749px;width:1082px;height:22px;background:#fff;border:1px solid #c8c8c8"></div>
<div class="t" style="left:77px;top:750.99px;font-size:13.6px;color:#0c0cd0;"><i>Opdracht:</i> offset</div>
<div class="t" style="left:73px;top:778.16px;font-size:13.4px;color:#111;">Kies lijn, boog, cirkel, ellips, spline of polylijn:</div>
<div class="a" style="left:342px;top:776px;width:785px;height:18px;background:#fff"></div>
<div class="a" style="left:1139px;top:750px;width:14px;height:20px;background:#f6f6f6"></div>
<div class="a" style="left:1142px;top:750px;width:8px;height:17px;border-radius:4px;background:#7f7f7f"></div>
<div class="a" style="left:1127.4px;top:772px;width:25.5px;height:25.7px;background:#ececec;border:1px solid #b4b4b4"></div>
<svg class="a" style="left:1133px;top:780px" width="15" height="11" viewBox="0 0 15 11"><rect x=".5" y=".5" width="13.5" height="9.2" fill="#f0f0f0" stroke="#333" stroke-width="1"/><rect x=".5" y=".5" width="13.5" height="2.8" fill="#111"/><rect x="9.5" y="1.2" width="1.3" height="1.2" fill="#fff"/></svg>
<div class="a" style="left:1152px;top:130px;width:3px;height:668px;background:#ececec"></div><div class="a" style="left:1154.5px;top:108px;width:1.2px;height:690px;background:#c4c4c4"></div>
<div class="a" style="left:1155px;top:108px;width:300px;height:23px;background:linear-gradient(#eeeeee,#d8d8d8)"></div>
<div class="a" style="left:1155px;top:156px;width:300px;height:642px;background:#fff"></div>
<svg class="a" style="left:1153px;top:108px" width="347" height="690" viewBox="1153 108 347 690"><defs><linearGradient id="hb" x1="0" y1="0" x2="0" y2="1"><stop offset="0" stop-color="#f4f4f4"/><stop offset=".4" stop-color="#e8e8e8"/><stop offset="1" stop-color="#f2f2f2"/></linearGradient></defs><circle cx="1164" cy="118" r="7" fill="#6e6e6e"/><path d="M1161 115 L1167 121 M1167 115 L1161 121" stroke="#e8e8e8" stroke-width="1.6"/><circle cx="1182" cy="118" r="7" fill="#6e6e6e"/><rect x="1179.5" y="116.5" width="5" height="4" fill="none" stroke="#e8e8e8" stroke-width="1"/><path d="M1181 116.5 V114.5 H1186 V118.5 H1184.5" fill="none" stroke="#e8e8e8" stroke-width="1"/><rect x="1155" y="129.5" width="300" height="1.5" fill="#c4c4c4"/><rect x="1156.1" y="131.6" width="57.8" height="23.4" fill="url(#hb)" stroke="#9a9a9a" stroke-width="1.2"/><rect x="1216.1" y="131.6" width="57.8" height="23.4" fill="url(#hb)" stroke="#9a9a9a" stroke-width="1.2"/><rect x="1276.1" y="131.6" width="57.8" height="23.4" fill="url(#hb)" stroke="#9a9a9a" stroke-width="1.2"/><rect x="1336.1" y="131.6" width="57.8" height="23.4" fill="url(#hb)" stroke="#9a9a9a" stroke-width="1.2"/><rect x="1396.1" y="131.6" width="57.8" height="23.4" fill="url(#hb)" stroke="#9a9a9a" stroke-width="1.2"/><g transform="translate(1184.5,143) scale(1.0)"><path d="M-8 0.8 Q-5 -6.2 0.5 -6 Q5.5 -5.8 8 -0.2 Q5.5 6.2 0 6 Q-5 5.8 -8 0.8 Z" fill="#111"/><path d="M-4.8 0.6 Q-2.8 -3.4 0.2 -3.4 Q3.2 -3.4 4.8 0 Q3 3.6 0 3.6 Q-3 3.6 -4.8 0.6 Z" fill="#fff"/><circle cx="0.2" cy="0.2" r="2.5" fill="#111"/><path d="M-0.5 -1.6 Q0.6 -0.2 0.2 1.2" stroke="#fff" stroke-width=".6" fill="none"/></g><g transform="translate(1244.5,143) scale(1.0)"><path d="M-8 0.8 Q-5 -6.2 0.5 -6 Q5.5 -5.8 8 -0.2 Q5.5 6.2 0 6 Q-5 5.8 -8 0.8 Z" fill="#a8a8a8"/><path d="M-4.8 0.6 Q-2.8 -3.4 0.2 -3.4 Q3.2 -3.4 4.8 0 Q3 3.6 0 3.6 Q-3 3.6 -4.8 0.6 Z" fill="#fff"/><circle cx="0.2" cy="0.2" r="2.5" fill="#a8a8a8"/><path d="M-0.5 -1.6 Q0.6 -0.2 0.2 1.2" stroke="#fff" stroke-width=".6" fill="none"/></g><path d="M1302.5 137.5 H1306.5 V141.5 H1310.5 V145 H1306.5 V149 H1302.5 V145 H1298.5 V141.5 H1302.5 Z" fill="#e00000" stroke="#a00000" stroke-width=".5"/><rect x="1358.5" y="141.5" width="11.5" height="3.5" fill="#e00000" stroke="#a00000" stroke-width=".5"/><path d="M1421.68 148.16 L1430.72 139.12 L1428.88 137.28 L1419.84 146.32 Z" fill="#eba638" stroke="#8a5a18" stroke-width=".6"/><path d="M1430.72 139.12 L1432.42 137.42 L1430.58 135.58 L1428.88 137.28 Z" fill="#e02424" stroke="#8a2018" stroke-width=".5"/><path d="M1418.50 149.50 L1421.68 148.16 L1419.84 146.32 Z" fill="#f2d4a4" stroke="#8a5a18" stroke-width=".5"/><path d="M1418.50 149.50 L1419.72 149.02 L1418.98 148.28 Z" fill="#333"/><rect x="1161" y="163" width="16" height="8.5" fill="#fff" stroke="#111" stroke-width="1"/><g transform="translate(1423,166.4) scale(1.0)"><path d="M-8 0.8 Q-5 -6.2 0.5 -6 Q5.5 -5.8 8 -0.2 Q5.5 6.2 0 6 Q-5 5.8 -8 0.8 Z" fill="#111"/><path d="M-4.8 0.6 Q-2.8 -3.4 0.2 -3.4 Q3.2 -3.4 4.8 0 Q3 3.6 0 3.6 Q-3 3.6 -4.8 0.6 Z" fill="#fff"/><circle cx="0.2" cy="0.2" r="2.5" fill="#111"/><path d="M-0.5 -1.6 Q0.6 -0.2 0.2 1.2" stroke="#fff" stroke-width=".6" fill="none"/></g><path d="M1441.5 166 V163.5 Q1441.5 160.5 1445 160.5 Q1448.5 160.5 1448.5 163.5 V166" fill="none" stroke="#b8b8b8" stroke-width="1.4"/><rect x="1440.2" y="166" width="9.6" height="7.6" fill="#b4b4b4"/><rect x="1155" y="176" width="300" height="20" fill="#ffd9d9"/><defs><linearGradient id="lh" x1="0" y1="0" x2="1" y2="0"><stop offset="0" stop-color="#f07070" stop-opacity="0"/><stop offset=".08" stop-color="#f07878"/><stop offset=".92" stop-color="#f07878"/><stop offset="1" stop-color="#f07070" stop-opacity="0"/></linearGradient><linearGradient id="lv" x1="0" y1="0" x2="0" y2="1"><stop offset="0" stop-color="#f07070" stop-opacity="0"/><stop offset=".25" stop-color="#f07878"/><stop offset=".75" stop-color="#f07878"/><stop offset="1" stop-color="#f07070" stop-opacity="0"/></linearGradient></defs><rect x="1153" y="175.2" width="330" height="1.6" fill="url(#lh)"/><rect x="1153" y="195.2" width="330" height="1.6" fill="url(#lh)"/><rect x="1154.2" y="168" width="1.6" height="36" fill="url(#lv)"/><rect x="1452.2" y="168" width="1.6" height="36" fill="url(#lv)"/><rect x="1161" y="183" width="16" height="8.5" fill="#ff0000" stroke="#111" stroke-width="1"/><path d="M1398.07 191.58 L1406.53 183.46 L1405.01 181.87 L1396.55 189.99 Z" fill="#eba638" stroke="#8a5a18" stroke-width=".6"/><path d="M1406.53 183.46 L1408.26 181.79 L1406.74 180.21 L1405.01 181.87 Z" fill="#e02424" stroke="#8a2018" stroke-width=".5"/><path d="M1395.00 193.00 L1398.07 191.58 L1396.55 189.99 Z" fill="#f2d4a4" stroke="#8a5a18" stroke-width=".5"/><path d="M1395.00 193.00 L1396.17 192.49 L1395.56 191.85 Z" fill="#333"/><g transform="translate(1423,186.6) scale(1.0)"><path d="M-8 0.8 Q-5 -6.2 0.5 -6 Q5.5 -5.8 8 -0.2 Q5.5 6.2 0 6 Q-5 5.8 -8 0.8 Z" fill="#2a0a0a"/><path d="M-4.8 0.6 Q-2.8 -3.4 0.2 -3.4 Q3.2 -3.4 4.8 0 Q3 3.6 0 3.6 Q-3 3.6 -4.8 0.6 Z" fill="#fff"/><circle cx="0.2" cy="0.2" r="2.5" fill="#2a0a0a"/><path d="M-0.5 -1.6 Q0.6 -0.2 0.2 1.2" stroke="#fff" stroke-width=".6" fill="none"/></g><path d="M1441.5 186 V183.5 Q1441.5 180.5 1445 180.5 Q1448.5 180.5 1448.5 183.5 V186" fill="none" stroke="#c8a4a4" stroke-width="1.4"/><rect x="1440.2" y="186" width="9.6" height="7.6" fill="#c4a4a4"/></svg>
<div class="t" style="left:1297px;top:112.14px;font-size:12px;color:#262626;">Lagenlijst</div>
<div class="t" style="left:1183px;top:160.15px;font-size:14px;color:#111;">0</div>
<div class="t" style="left:1183px;top:180.15px;font-size:14px;color:#2a0a0a;">Offset</div>
<div class="a" style="left:1455px;top:108px;width:45px;height:690px;background:linear-gradient(90deg,#d4d4d4,#ececec 8%,#e2e2e2 50%,#c6c6c6)"></div>
<svg class="a" style="left:1455px;top:108px" width="45" height="690" viewBox="1455 108 45 690"><rect x="1462" y="116" width="2" height="2" fill="#9a9a9a"/><rect x="1468" y="116" width="2" height="2" fill="#9a9a9a"/><rect x="1474" y="116" width="2" height="2" fill="#9a9a9a"/><rect x="1480" y="116" width="2" height="2" fill="#9a9a9a"/><rect x="1486" y="116" width="2" height="2" fill="#9a9a9a"/><rect x="1456.2" y="120.3" width="50" height="42.2" rx="6" fill="#b6b6b6"/><rect x="1456.2" y="416.8" width="50" height="42.2" rx="6" fill="#b6b6b6"/><line x1="1456" y1="260.5" x2="1500" y2="260.5" stroke="#6a6a6a" stroke-dasharray="1.2 2.8"/><line x1="1456" y1="409.5" x2="1500" y2="409.5" stroke="#6a6a6a" stroke-dasharray="1.2 2.8"/><rect x="1463.5" y="127.5" width="27" height="27" fill="#fff" stroke="#222" stroke-width="1"/><rect x="1463.5" y="127.5" width="27" height="4.5" fill="#000"/><rect x="1465" y="128.5" width="3" height="3" fill="#fff"/><g transform="translate(1463,127)"><path d="M9 16 L15 13 V24 L9 27 Z" fill="#d0d0d0" stroke="#555" stroke-width=".6"/><path d="M12 14 L22 9 V20 L12 25 Z" fill="#fff" stroke="#555" stroke-width=".7"/><path d="M14 21 L19 12 L19 19 Z" fill="none" stroke="#f04040" stroke-width=".8"/></g><rect x="1463.5" y="174.8" width="27" height="27" fill="#fff" stroke="#222" stroke-width="1"/><rect x="1463.5" y="174.8" width="27" height="4.5" fill="#000"/><rect x="1465" y="175.8" width="3" height="3" fill="#fff"/><g transform="translate(1463,174.3)"><rect x="8" y="10" width="9" height="7" fill="#f4eccc" stroke="#777" stroke-width=".7"/><circle cx="18" cy="18" r="4" fill="#f4eccc" stroke="#777" stroke-width=".7"/></g><rect x="1463.5" y="220.6" width="27" height="27" fill="#fff" stroke="#222" stroke-width="1"/><rect x="1463.5" y="220.6" width="27" height="4.5" fill="#000"/><rect x="1465" y="221.6" width="3" height="3" fill="#fff"/><g transform="translate(1463,220.1)"><rect x="6.5" y="10" width="14.5" height="10" rx="2" fill="#f8f8f8" stroke="#c0d0e8" stroke-width=".8"/></g><rect x="1463.5" y="276.3" width="27" height="27" fill="#fff" stroke="#222" stroke-width="1"/><rect x="1463.5" y="276.3" width="27" height="4.5" fill="#000"/><rect x="1465" y="277.3" width="3" height="3" fill="#fff"/><g transform="translate(1463,275.8)"><rect x="5" y="8" width="3.5" height="2.5" fill="#111"/><rect x="5" y="13" width="3.5" height="2.5" fill="#111"/><rect x="5" y="18" width="3.5" height="2.5" fill="#111"/><rect x="10.5" y="8" width="11" height="2.5" fill="none" stroke="#333" stroke-width=".6"/><rect x="10.5" y="13" width="11" height="2.5" fill="none" stroke="#333" stroke-width=".6"/><rect x="10.5" y="18" width="11" height="2.5" fill="none" stroke="#333" stroke-width=".6"/></g><rect x="1463.5" y="321.5" width="27" height="27" fill="#fff" stroke="#222" stroke-width="1"/><rect x="1463.5" y="321.5" width="27" height="4.5" fill="#000"/><rect x="1465" y="322.5" width="3" height="3" fill="#fff"/><g transform="translate(1463,321)"><path d="M7 9.5 H21 L16 15 V23 L13.5 21.5 V15 Z" fill="#a8a8a8" stroke="#555" stroke-width=".7"/><ellipse cx="14" cy="9.8" rx="7" ry="1.5" fill="#ccc" stroke="#666" stroke-width=".5"/></g><rect x="1463.5" y="368.1" width="27" height="27" fill="#fff" stroke="#222" stroke-width="1"/><rect x="1463.5" y="368.1" width="27" height="4.5" fill="#000"/><rect x="1465" y="369.1" width="3" height="3" fill="#fff"/><g transform="translate(1463,367.6)"><path d="M6 10 L12 14 H19 V20 H12 L6 24 Z" fill="#eee" stroke="#333" stroke-width=".7"/><rect x="12" y="14" width="8" height="6" rx="1.5" fill="#888"/><path d="M3 17 H24" stroke="#f08080" stroke-width=".6" stroke-dasharray="1 1"/></g><rect x="1463.5" y="423.5" width="27" height="27" fill="#fff" stroke="#222" stroke-width="1"/><rect x="1463.5" y="423.5" width="27" height="4.5" fill="#000"/><rect x="1465" y="424.5" width="3" height="3" fill="#fff"/><g transform="translate(1463,423)"><path d="M3.5 8 H9 M3.5 10.5 H10 M3.5 13 H10 M3.5 15.5 H10" stroke="#555" stroke-width=".6"/><path d="M2 23 H25" stroke="#333" stroke-width=".6"/><path d="M9 25.5 H21" stroke="#555" stroke-width=".8"/></g><rect x="1463.5" y="470.5" width="27" height="27" fill="#fff" stroke="#222" stroke-width="1"/><rect x="1463.5" y="470.5" width="27" height="4.5" fill="#000"/><rect x="1465" y="471.5" width="3" height="3" fill="#fff"/><g transform="translate(1463,470)"><rect x="8.5" y="8" width="11.5" height="14" rx="1" fill="#c98a26"/><rect x="10" y="9.5" width="8.5" height="11" fill="#f4f4f4"/><rect x="12" y="7.5" width="4.5" height="2.5" fill="#999"/><path d="M11 12.5 H17.5 M11 14.5 H17.5 M11 16.5 H16" stroke="#bbb" stroke-width=".6"/></g></svg>
<div class="a" style="left:0;top:798px;width:1500px;height:46px;background:#dcdcdc"></div>
<div class="a" style="left:0;top:797.5px;width:1500px;height:1px;background:#d0d0d0"></div>
<div class="t" style="left:2px;top:808.33px;font-size:10px;color:#1e1e1e;letter-spacing:0.12px">47.7778,5.0222</div>
<div class="t" style="left:2px;top:828.33px;font-size:10px;color:#1e1e1e;letter-spacing:0.12px">@47.7778,5.0222</div>
<div class="a" style="left:253px;top:802px;width:1px;height:40px;background:#9a9a9a"></div>
<div class="t" style="left:256px;top:808.33px;font-size:10px;color:#1e1e1e;letter-spacing:0.12px">48.041&lt;6°</div>
<div class="t" style="left:256px;top:828.33px;font-size:10px;color:#1e1e1e;letter-spacing:0.12px">@48.041&lt;6°</div>
<div class="t" style="left:500px;top:811.5px;font-size:10px;color:#1e1e1e;text-align:right;width:199px;line-height:11.5px;white-space:normal;letter-spacing:0.15px">Kies lijn, boog, cirkel, ellips, spline of polylijn</div>
<div class="t" style="left:754px;top:817.53px;font-size:10px;color:#1e1e1e;letter-spacing:0.05px">Annuleer</div>
<div class="t" style="left:948px;top:817.53px;font-size:10px;color:#1e1e1e;letter-spacing:0.12px">Geen objecten geselecteerd.</div>
<svg class="a" style="left:0;top:798px" width="1500" height="46" viewBox="0 798 1500 46"><circle cx="509.5" cy="821.8" r="3" fill="#c6c6c6"/><circle cx="943" cy="821.8" r="3" fill="#c6c6c6"/><circle cx="1272" cy="821.8" r="3" fill="#c6c6c6"/><path d="M717.5 815 Q717.5 806.5 726 806.5 Q734.5 806.5 734.5 815 V827 Q734.5 835.5 726 835.5 Q717.5 835.5 717.5 827 Z" fill="#fff" stroke="#444" stroke-width=".9"/><path d="M717.5 819 Q726 817 734.5 819" fill="none" stroke="#444" stroke-width=".9"/><path d="M726 807 V818" stroke="#444" stroke-width=".6"/><rect x="724.6" y="808.5" width="2.8" height="6.5" rx="1.4" fill="#fff" stroke="#444" stroke-width=".7"/></svg>
<svg class="a" style="left:92px;top:110px" width="20" height="18" viewBox="92 110 20 18"><circle cx="102.1" cy="118.7" r="5.3" fill="#fafafa" stroke="#233f8f" stroke-width="2.4"/><path d="M99 119 H104 M101.5 116 V121" stroke="#bbb" stroke-width=".6"/><line x1="102.5" y1="119" x2="107" y2="123.5" stroke="#f0a020" stroke-width="2"/><circle cx="107.3" cy="124" r="1.3" fill="#e06060"/></svg>
</body></html>
